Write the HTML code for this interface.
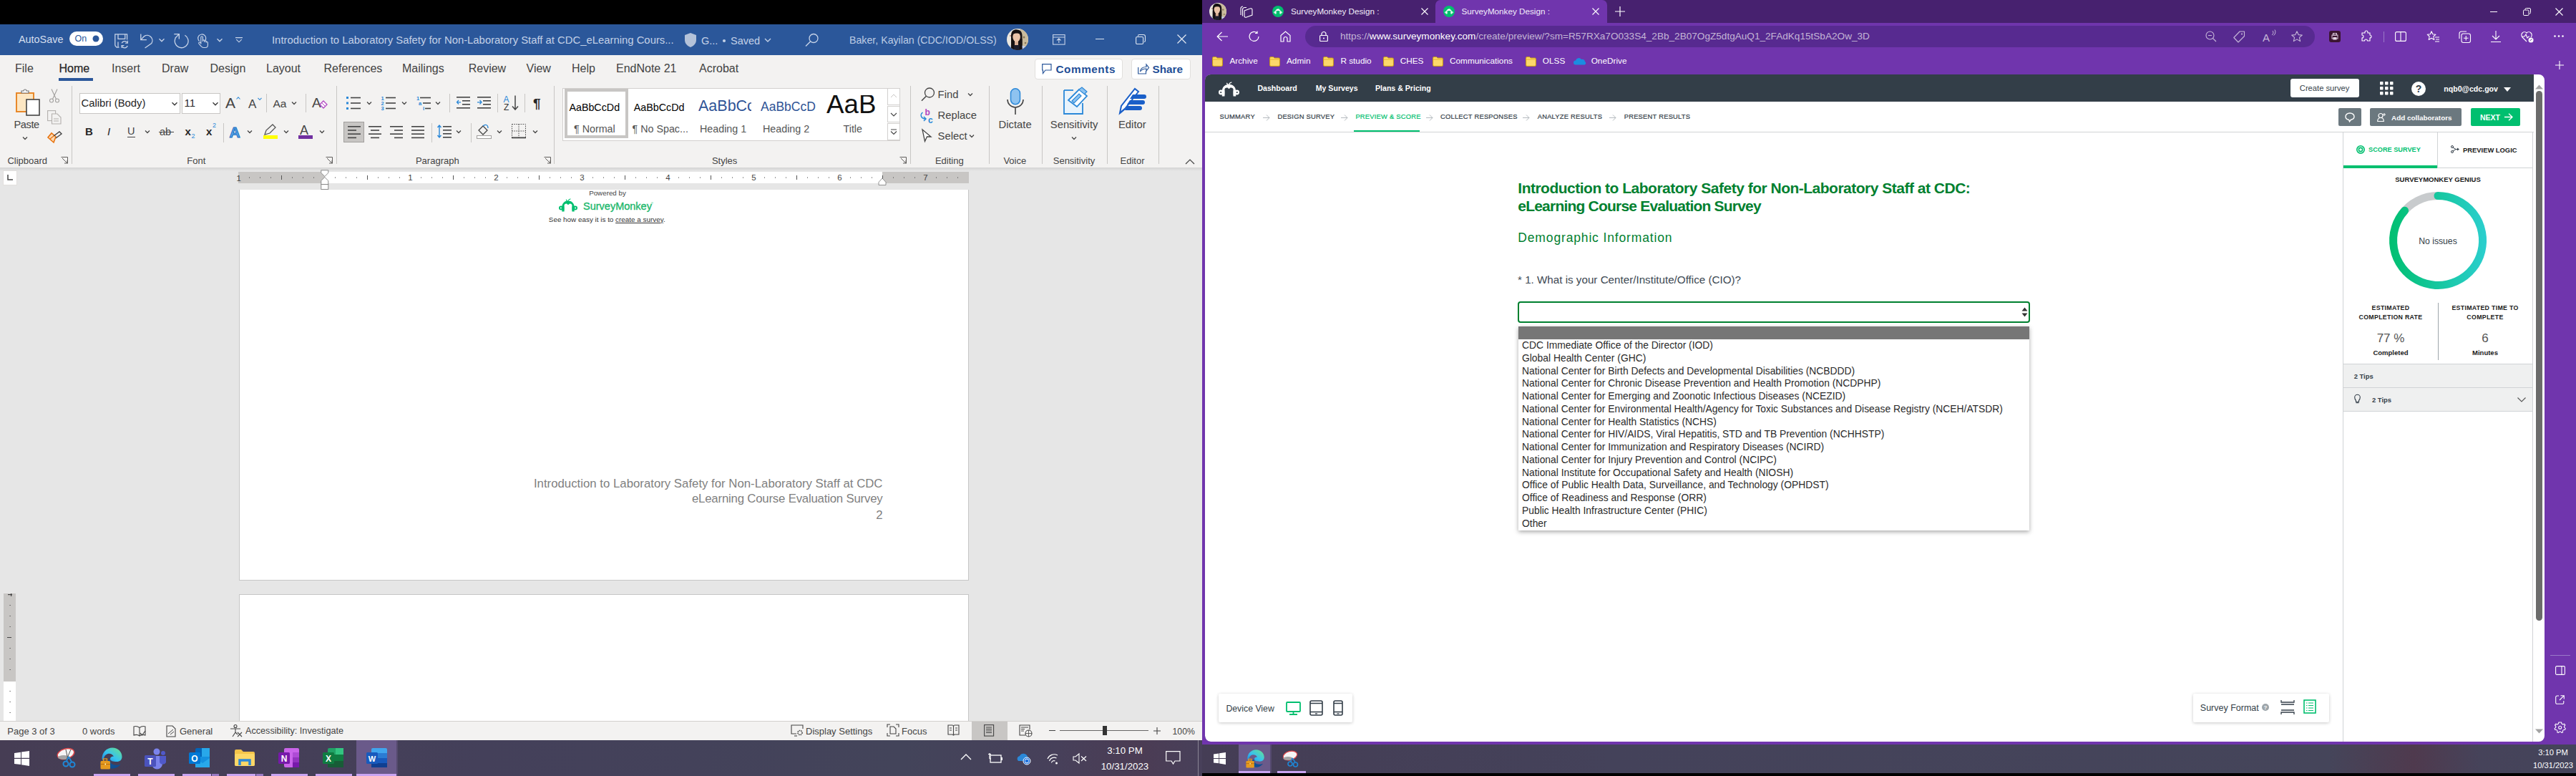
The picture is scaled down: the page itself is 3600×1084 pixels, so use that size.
<!DOCTYPE html>
<html><head><meta charset="utf-8">
<style>
*{margin:0;padding:0;box-sizing:border-box}
html,body{width:3600px;height:1084px;overflow:hidden;background:#000;font-family:"Liberation Sans",sans-serif;position:relative}
.a{position:absolute}
.t{position:absolute;white-space:nowrap;line-height:1}
svg{position:absolute;overflow:visible}
</style></head><body>
<div class="a" style="left:0px;top:34px;width:1680px;height:1050px;background:#e6e6e6"></div>
<div class="a" style="left:0px;top:34px;width:1680px;height:43px;background:#2b579a"></div>
<div class="t" style="left:26.00px;top:47.81px;font-size:14.4px;color:#d5dfee;font-weight:400;">AutoSave</div>
<div class="a" style="left:97px;top:44px;width:47px;height:20px;background:#fff;border-radius:10px"></div>
<div class="t" style="left:104.50px;top:47.92px;font-size:12.5px;color:#2b579a;font-weight:400;">On</div>
<svg style="left:129px;top:49px;" width="10" height="10" viewBox="0 0 10 10"><circle cx="5" cy="5" r="4.5" fill="#2b579a"/></svg>
<svg style="left:160px;top:47px;" width="20" height="20" viewBox="0 0 20 20"><path d="M0.8,16.5 V0.8 H17.6 V8.5 M0.8,16.5 L3,19.2 H6.5 M5,19 V11.6 M5,0.8 V7.4 H14.8 V0.8" fill="none" stroke="#c9d5e9" stroke-width="1.25"/><path d="M10.2,13.2 A4.3,4.3 0 0 1 17.8,12.6 M18.2,17 A4.3,4.3 0 0 1 10.4,17.6" fill="none" stroke="#c9d5e9" stroke-width="1.25"/><path d="M18.4,9.8 V13.3 H15 M10,20 V16.6 H13.4" fill="none" stroke="#c9d5e9" stroke-width="1.1"/></svg>
<svg style="left:196px;top:47px;" width="20" height="21" viewBox="0 0 20 21"><path d="M0.8,0.5 V8.6 H8.9" fill="none" stroke="#c9d5e9" stroke-width="1.3"/><path d="M0.8,8.6 L5.6,3.6 A7.3,7.3 0 0 1 15.8,13.6 L6.6,20" fill="none" stroke="#c9d5e9" stroke-width="1.3"/></svg>
<svg style="left:220.3px;top:51.5px;" width="12" height="8" viewBox="0 0 12 8"><path d="M2.5,2.25 L6,5.75 L9.5,2.25" fill="none" stroke="#c9d5e9" stroke-width="1.25"/></svg>
<svg style="left:243px;top:47px;" width="21" height="21" viewBox="0 0 21 21"><path d="M15.4,2.2 A9.4,9.4 0 1 1 2.2,6.2" fill="none" stroke="#c9d5e9" stroke-width="1.3"/><path d="M0.3,0.6 H7.3 V7.6 M7.3,0.6 L1.8,6.2" fill="none" stroke="#c9d5e9" stroke-width="1.3"/></svg>
<svg style="left:276px;top:47px;" width="15" height="20" viewBox="0 0 15 20"><path d="M2.5,10.5 A5.5,5.5 0 1 1 10.8,9.5" fill="none" stroke="#c9d5e9" stroke-width="1.2"/><path d="M4.8,14.5 V5 a1.3,1.3 0 0 1 2.6,0 V11 M7.4,10 a1.2,1.2 0 0 1 2.4,0 V12 M9.8,11 a1.2,1.2 0 0 1 2.4,0 V12.5 M12.2,12 a1.2,1.2 0 0 1 2.2,0.5 V16 C14.4,18 13,19.5 11,19.5 H8.5 C7,19.5 6,18.8 5,17.5 L1.8,13.8 a1.2,1.2 0 0 1 1.8,-1.5 L4.8,13.5" fill="none" stroke="#c9d5e9" stroke-width="1.15"/></svg>
<svg style="left:300.5px;top:51.5px;" width="12" height="8" viewBox="0 0 12 8"><path d="M2.5,2.25 L6,5.75 L9.5,2.25" fill="none" stroke="#c9d5e9" stroke-width="1.25"/></svg>
<svg style="left:329px;top:52px;" width="10" height="9" viewBox="0 0 10 9"><path d="M0,0.6 H10 M1.3,3.2 L5,6.8 L8.7,3.2" fill="none" stroke="#c9d5e9" stroke-width="1.1"/></svg>
<div class="t" style="left:380.00px;top:49.43px;font-size:14.85px;color:#c3d1e7;font-weight:400;">Introduction to Laboratory Safety for Non-Laboratory Staff at CDC_eLearning Cours...</div>
<svg style="left:956px;top:45px;" width="18" height="22" viewBox="0 0 18 22"><path d="M9,1 L17,4 V11 C17,16 13,19.5 9,21 C5,19.5 1,16 1,11 V4 Z" fill="#b4c2d9"/></svg>
<div class="t" style="left:980.00px;top:49.73px;font-size:14.5px;color:#c3d1e7;font-weight:400;">G...</div>
<svg style="left:1009px;top:54px;" width="6" height="6" viewBox="0 0 6 6"><circle cx="3" cy="3" r="2.1" fill="#c3d1e7"/></svg>
<div class="t" style="left:1021.00px;top:49.73px;font-size:14.5px;color:#c3d1e7;font-weight:400;">Saved</div>
<svg style="left:1067px;top:52px;" width="12" height="8" viewBox="0 0 12 8"><path d="M2,2.0 L6,6.0 L10,2.0" fill="none" stroke="#c3d1e7" stroke-width="1.4"/></svg>
<svg style="left:1125px;top:46px;" width="20" height="20" viewBox="0 0 20 20"><circle cx="12" cy="7.5" r="6" fill="none" stroke="#c6d3e8" stroke-width="1.3"/><path d="M7.5,12 L1,18.5" stroke="#c6d3e8" stroke-width="1.4"/></svg>
<div class="t" style="left:1187.00px;top:49.28px;font-size:14.2px;color:#bccbe4;font-weight:400;">Baker, Kayilan (CDC/IOD/OLSS)</div>
<svg style="left:1407px;top:39.7px;" width="30" height="30" viewBox="0 0 30 30"><defs><clipPath id="av1"><circle cx="15" cy="15" r="15"/></clipPath></defs><g clip-path="url(#av1)"><rect width="30" height="30" fill="#ebe7df"/><rect x="18" y="0" width="12" height="30" fill="#c9bb9c"/><circle cx="24" cy="12" r="1.5" fill="#8a7a5a"/><circle cx="26" cy="20" r="1.3" fill="#8a7a5a"/><circle cx="5" cy="10" r="0.8" fill="#a04030"/><path d="M6,30 V9.5 C6,3.5 9.5,1.3 13.5,1.3 C18,1.3 21.5,4 21.5,10 V30 Z" fill="#161112"/><path d="M2,30 C3,24.5 6.5,22.5 10.5,22.5 H16.5 C20.5,22.5 24.5,24.5 27.5,30 Z" fill="#1d1d2b"/><path d="M3,25 L8,23 L9,29 L4,30 Z" fill="#c6d2ee"/><path d="M21,23.5 L26,25 L25.5,29 L21.5,28.5 Z" fill="#c6d2ee"/><rect x="11" y="16" width="5" height="7" fill="#d9ae94"/><ellipse cx="13.6" cy="11.6" rx="5.3" ry="7" fill="#eac3a8"/><path d="M8.3,8 C9,4.5 11,3.5 13.8,3.5 C16.5,3.5 18.5,5 19,8 C17,6 11,6 8.3,8 Z" fill="#161112"/><path d="M6,14 V30 H10 V17 Z M17.5,17 V30 H21.5 V14 Z" fill="#161112"/></g></svg>
<svg style="left:1471px;top:48px;" width="18" height="15" viewBox="0 0 18 15"><rect x="0.6" y="0.6" width="16.5" height="13.5" fill="none" stroke="#c6d3e8" stroke-width="1.1"/><path d="M0.6,4 H17 M8.8,12 V6 M6,8.5 L8.8,5.8 L11.6,8.5" fill="none" stroke="#c6d3e8" stroke-width="1.1"/></svg>
<div class="a" style="left:1531px;top:54px;width:12px;height:1.3px;background:#dfe6f1"></div>
<svg style="left:1587px;top:48px;" width="14" height="14" viewBox="0 0 14 14"><path d="M3.5,2.5 V2 a1.5,1.5 0 0 1 1.5,-1.5 H11 a2.5,2.5 0 0 1 2.5,2.5 V9 a1.5,1.5 0 0 1 -1.5,1.5" fill="none" stroke="#dfe6f1" stroke-width="1.1"/><rect x="0.6" y="3.5" width="10" height="10" rx="1.5" fill="none" stroke="#dfe6f1" stroke-width="1.1"/></svg>
<svg style="left:1645px;top:48px;" width="13" height="13" viewBox="0 0 13 13"><path d="M0.5,0.5 L12.5,12.5 M12.5,0.5 L0.5,12.5" stroke="#e6ebf3" stroke-width="1.2"/></svg>
<div class="a" style="left:0px;top:77px;width:1680px;height:157px;background:#f3f2f1"></div>
<div class="a" style="left:0px;top:234px;width:1680px;height:5px;background:linear-gradient(#d4d4d4,#e6e6e6)"></div>
<div class="t" style="left:21.00px;top:88.26px;font-size:16px;color:#424242;font-weight:400;">File</div>
<div class="t" style="left:82.50px;top:88.26px;font-size:16px;color:#262626;font-weight:400;-webkit-text-stroke:0.25px #262626">Home</div>
<div class="t" style="left:156.00px;top:88.26px;font-size:16px;color:#424242;font-weight:400;">Insert</div>
<div class="t" style="left:226.00px;top:88.26px;font-size:16px;color:#424242;font-weight:400;">Draw</div>
<div class="t" style="left:293.50px;top:88.26px;font-size:16px;color:#424242;font-weight:400;">Design</div>
<div class="t" style="left:372.00px;top:88.26px;font-size:16px;color:#424242;font-weight:400;">Layout</div>
<div class="t" style="left:452.50px;top:88.26px;font-size:16px;color:#424242;font-weight:400;">References</div>
<div class="t" style="left:562.00px;top:88.26px;font-size:16px;color:#424242;font-weight:400;">Mailings</div>
<div class="t" style="left:654.70px;top:88.26px;font-size:16px;color:#424242;font-weight:400;">Review</div>
<div class="t" style="left:735.50px;top:88.26px;font-size:16px;color:#424242;font-weight:400;">View</div>
<div class="t" style="left:799.00px;top:88.26px;font-size:16px;color:#424242;font-weight:400;">Help</div>
<div class="t" style="left:861.00px;top:88.26px;font-size:16px;color:#424242;font-weight:400;">EndNote 21</div>
<div class="t" style="left:977.00px;top:88.26px;font-size:16px;color:#424242;font-weight:400;">Acrobat</div>
<div class="a" style="left:82px;top:109px;width:48px;height:3.5px;background:#2b579a"></div>
<div class="a" style="left:1446px;top:82px;width:123px;height:29px;background:#fff;border:1px solid #e1dfdd;border-radius:4px"></div>
<svg style="left:1456px;top:89px;" width="14" height="15" viewBox="0 0 14 15"><path d="M0.7,0.7 H13 V9 H5 L1.5,13.5 V9 H0.7 Z" fill="none" stroke="#2b579a" stroke-width="1.2"/></svg>
<div class="t" style="left:1475.50px;top:89.05px;font-size:15.3px;color:#1f4e96;font-weight:700;letter-spacing:0.55px;">Comments</div>
<div class="a" style="left:1581px;top:82px;width:83px;height:29px;background:#fff;border:1px solid #e1dfdd;border-radius:4px"></div>
<svg style="left:1590px;top:88px;" width="16" height="16" viewBox="0 0 16 16"><path d="M0.7,6 V15 H11.5 V11" fill="none" stroke="#2b579a" stroke-width="1.2"/><path d="M3.5,12 C4,7 7,5.5 12,5.5 V2 L15.5,6.5 L12,11 V8 C8,8 5.5,9 3.5,12 Z" fill="none" stroke="#2b579a" stroke-width="1.2"/></svg>
<div class="t" style="left:1610.50px;top:89.05px;font-size:15.3px;color:#1f4e96;font-weight:700;">Share</div>
<div class="a" style="left:99.6px;top:120px;width:1px;height:109px;background:#c8c6c4"></div>
<div class="a" style="left:469.6px;top:120px;width:1px;height:109px;background:#c8c6c4"></div>
<div class="a" style="left:774px;top:120px;width:1px;height:109px;background:#c8c6c4"></div>
<div class="a" style="left:1271.5px;top:120px;width:1px;height:109px;background:#c8c6c4"></div>
<div class="a" style="left:1382.4px;top:120px;width:1px;height:109px;background:#c8c6c4"></div>
<div class="a" style="left:1455.5px;top:120px;width:1px;height:109px;background:#c8c6c4"></div>
<div class="a" style="left:1546.6px;top:120px;width:1px;height:109px;background:#c8c6c4"></div>
<div class="a" style="left:1618.5px;top:120px;width:1px;height:109px;background:#c8c6c4"></div>
<div class="t" style="left:10.40px;top:217.50px;font-size:13px;color:#444;font-weight:400;">Clipboard</div>
<div class="t" style="left:-325.70px;width:1200px;text-align:center;top:217.50px;font-size:13px;color:#444;font-weight:400;">Font</div>
<div class="t" style="left:11.30px;width:1200px;text-align:center;top:217.50px;font-size:13px;color:#444;font-weight:400;">Paragraph</div>
<div class="t" style="left:412.60px;width:1200px;text-align:center;top:217.50px;font-size:13px;color:#444;font-weight:400;">Styles</div>
<div class="t" style="left:726.80px;width:1200px;text-align:center;top:217.50px;font-size:13px;color:#444;font-weight:400;">Editing</div>
<div class="t" style="left:818.30px;width:1200px;text-align:center;top:217.50px;font-size:13px;color:#444;font-weight:400;">Voice</div>
<div class="t" style="left:901.00px;width:1200px;text-align:center;top:217.50px;font-size:13px;color:#444;font-weight:400;">Sensitivity</div>
<div class="t" style="left:982.50px;width:1200px;text-align:center;top:217.50px;font-size:13px;color:#444;font-weight:400;">Editor</div>
<svg style="left:85px;top:219px;" width="10" height="10" viewBox="0 0 10 10"><path d="M0.5,0.5 H9.5 V9.5 M2,2 L9,9 M5,9 H9 V5" fill="none" stroke="#605e5c" stroke-width="1"/></svg>
<svg style="left:454.5px;top:219px;" width="10" height="10" viewBox="0 0 10 10"><path d="M0.5,0.5 H9.5 V9.5 M2,2 L9,9 M5,9 H9 V5" fill="none" stroke="#605e5c" stroke-width="1"/></svg>
<svg style="left:760px;top:219px;" width="10" height="10" viewBox="0 0 10 10"><path d="M0.5,0.5 H9.5 V9.5 M2,2 L9,9 M5,9 H9 V5" fill="none" stroke="#605e5c" stroke-width="1"/></svg>
<svg style="left:1257px;top:219px;" width="10" height="10" viewBox="0 0 10 10"><path d="M0.5,0.5 H9.5 V9.5 M2,2 L9,9 M5,9 H9 V5" fill="none" stroke="#605e5c" stroke-width="1"/></svg>
<svg style="left:1656px;top:222px;" width="14" height="8" viewBox="0 0 14 8"><path d="M1,7 L7,1 L13,7" fill="none" stroke="#444" stroke-width="1.2"/></svg>
<svg style="left:21px;top:124px;" width="36" height="38" viewBox="0 0 36 38"><path d="M2,6 H26 V32 H2 Z" fill="#fde7c3" stroke="#e8892b" stroke-width="2"/><path d="M9,6 V3 H12 a2,2 0 0 1 4,0 H19 V6 Z" fill="#fff" stroke="#777" stroke-width="1.2"/><rect x="16" y="15" width="18" height="22" fill="#fff" stroke="#444" stroke-width="1.6"/></svg>
<div class="t" style="left:19.50px;top:167.24px;font-size:14.6px;color:#444;font-weight:400;letter-spacing:-0.4px;">Paste</div>
<svg style="left:29px;top:189px;" width="12" height="8" viewBox="0 0 12 8"><path d="M3,2.5 L6,5.5 L9,2.5" fill="none" stroke="#444" stroke-width="1.25"/></svg>
<svg style="left:69px;top:124px;" width="14" height="20" viewBox="0 0 14 20"><circle cx="3" cy="16.5" r="2.5" fill="none" stroke="#a19f9d" stroke-width="1.1"/><circle cx="11" cy="16.5" r="2.5" fill="none" stroke="#a19f9d" stroke-width="1.1"/><path d="M4.5,14.5 L11,0.5 M9.5,14.5 L3,0.5" stroke="#a19f9d" stroke-width="1.1"/></svg>
<svg style="left:66px;top:154px;" width="20" height="20" viewBox="0 0 20 20"><rect x="0.6" y="0.6" width="11" height="14" fill="none" stroke="#b3b0ad" stroke-width="1.1"/><path d="M6.5,5 H14 L19,10 V19 H6.5 Z" fill="#f3f2f1" stroke="#b3b0ad" stroke-width="1.1"/><path d="M9,12 H16 M9,15 H16" stroke="#b3b0ad"/></svg>
<svg style="left:66px;top:183px;" width="21" height="20" viewBox="0 0 21 20"><path d="M1,9 L9,16 L12,8 L6,3 Z" fill="#fcd8b0" stroke="#e8730f" stroke-width="1.6"/><path d="M4,11 L9,7" stroke="#e8730f" stroke-width="1.2"/><path d="M9,7 L17,1 L20,4 L12,10" fill="none" stroke="#444" stroke-width="1.4"/></svg>
<div class="a" style="left:110.5px;top:130px;width:141px;height:29px;background:#fff;border:1px solid #c8c6c4"></div>
<div class="t" style="left:113.50px;top:137.43px;font-size:14.85px;color:#262626;font-weight:400;">Calibri (Body)</div>
<svg style="left:238px;top:141px;" width="12" height="8" viewBox="0 0 12 8"><path d="M2.5,2.25 L6,5.75 L9.5,2.25" fill="none" stroke="#333" stroke-width="1.25"/></svg>
<div class="a" style="left:254px;top:130px;width:54px;height:29px;background:#fff;border:1px solid #c8c6c4"></div>
<div class="t" style="left:257.50px;top:137.43px;font-size:14.85px;color:#262626;font-weight:400;">11</div>
<svg style="left:294.5px;top:141px;" width="12" height="8" viewBox="0 0 12 8"><path d="M2.5,2.25 L6,5.75 L9.5,2.25" fill="none" stroke="#333" stroke-width="1.25"/></svg>
<div class="t" style="left:315.00px;top:133.22px;font-size:21px;color:#444;font-weight:400;">A</div>
<svg style="left:330px;top:135px;" width="6" height="4" viewBox="0 0 6 4"><path d="M0.5,3.5 L3,0.8 L5.5,3.5" fill="none" stroke="#2b88d8" stroke-width="1.1"/></svg>
<div class="t" style="left:347.00px;top:136.61px;font-size:17px;color:#444;font-weight:400;">A</div>
<svg style="left:360px;top:136px;" width="6" height="4" viewBox="0 0 6 4"><path d="M0.5,0.8 L3,3.5 L5.5,0.8" fill="none" stroke="#2b88d8" stroke-width="1.1"/></svg>
<div class="a" style="left:372px;top:131px;width:1px;height:26px;background:#c8c6c4"></div>
<div class="t" style="left:381.50px;top:137.38px;font-size:15.5px;color:#444;font-weight:400;">Aa</div>
<svg style="left:404.5px;top:140px;" width="12" height="8" viewBox="0 0 12 8"><path d="M3,2.5 L6,5.5 L9,2.5" fill="none" stroke="#444" stroke-width="1.25"/></svg>
<div class="a" style="left:427px;top:131px;width:1px;height:26px;background:#c8c6c4"></div>
<div class="t" style="left:436.00px;top:134.42px;font-size:19px;color:#444;font-weight:400;">A</div>
<svg style="left:446px;top:140px;" width="12" height="11" viewBox="0 0 12 11"><path d="M1,6 L6,1 L11,6 L6,11 Z" fill="#fff" stroke="#b146c2" stroke-width="1.3"/><path d="M3.5,3.5 L8.5,8.5" stroke="#b146c2" stroke-width="1"/></svg>
<div class="t" style="left:119.00px;top:176.30px;font-size:15px;color:#262626;font-weight:700;">B</div>
<div class="t" style="left:150.00px;top:176.30px;font-size:15px;color:#262626;font-weight:400;font-style:italic;font-family:"Liberation Serif",serif">I</div>
<div class="t" style="left:178.00px;top:176.23px;font-size:14.5px;color:#444;font-weight:400;">U</div>
<div class="a" style="left:178px;top:191px;width:11px;height:1.2px;background:#444"></div>
<svg style="left:200px;top:180px;" width="12" height="8" viewBox="0 0 12 8"><path d="M3,2.5 L6,5.5 L9,2.5" fill="none" stroke="#444" stroke-width="1.25"/></svg>
<div class="t" style="left:223.00px;top:176.73px;font-size:14.5px;color:#444;font-weight:400;">ab</div>
<div class="a" style="left:222px;top:184px;width:21px;height:1.2px;background:#444"></div>
<div class="t" style="left:258.50px;top:176.30px;font-size:15px;color:#262626;font-weight:700;">x</div>
<div class="t" style="left:267.50px;top:186.38px;font-size:9px;color:#2b88d8;font-weight:400;">2</div>
<div class="t" style="left:288.00px;top:176.30px;font-size:15px;color:#262626;font-weight:700;">x</div>
<div class="t" style="left:297.00px;top:171.38px;font-size:9px;color:#2b88d8;font-weight:400;">2</div>
<div class="a" style="left:312px;top:172px;width:1px;height:27px;background:#c8c6c4"></div>
<div class="t" style="left:320.50px;top:174.22px;font-size:21px;color:#2b88d8;font-weight:700;-webkit-text-stroke:1px #1a6dbf;color:#5aa9ec">A</div>
<svg style="left:343px;top:180px;" width="12" height="8" viewBox="0 0 12 8"><path d="M3,2.5 L6,5.5 L9,2.5" fill="none" stroke="#444" stroke-width="1.25"/></svg>
<svg style="left:368px;top:173px;" width="20" height="16" viewBox="0 0 20 16"><path d="M2,15 L4,9 L13,1 L17,5 L9,13 Z" fill="none" stroke="#555" stroke-width="1.3"/></svg>
<div class="a" style="left:368px;top:189px;width:20px;height:4.5px;background:#ffff00"></div>
<svg style="left:394px;top:180px;" width="12" height="8" viewBox="0 0 12 8"><path d="M3,2.5 L6,5.5 L9,2.5" fill="none" stroke="#444" stroke-width="1.25"/></svg>
<div class="t" style="left:419.00px;top:172.76px;font-size:18px;color:#444;font-weight:400;">A</div>
<div class="a" style="left:417px;top:189px;width:20px;height:4.5px;background:#7030a0"></div>
<svg style="left:443.5px;top:180px;" width="12" height="8" viewBox="0 0 12 8"><path d="M3,2.5 L6,5.5 L9,2.5" fill="none" stroke="#444" stroke-width="1.25"/></svg>
<svg style="left:484px;top:134px;" width="20" height="20" viewBox="0 0 20 20"><rect x="0" y="1" width="3" height="3" fill="#2b88d8"/><rect x="0" y="8.5" width="3" height="3" fill="#2b88d8"/><rect x="0" y="16" width="3" height="3" fill="#2b88d8"/><rect x="6" y="1.7" width="14" height="1.6" fill="#444"/><rect x="6" y="9.2" width="14" height="1.6" fill="#444"/><rect x="6" y="16.7" width="14" height="1.6" fill="#444"/></svg>
<svg style="left:510px;top:140px;" width="12" height="8" viewBox="0 0 12 8"><path d="M3,2.5 L6,5.5 L9,2.5" fill="none" stroke="#444" stroke-width="1.25"/></svg>
<svg style="left:533px;top:134px;" width="20" height="20" viewBox="0 0 20 20"><text x="-0.5" y="6" font-size="7.5" font-weight="700" fill="#2b88d8" font-family="Liberation Sans">1</text><text x="-0.5" y="13" font-size="7.5" font-weight="700" fill="#2b88d8" font-family="Liberation Sans">2</text><text x="-0.5" y="20" font-size="7.5" font-weight="700" fill="#2b88d8" font-family="Liberation Sans">3</text><rect x="6" y="1.7" width="14" height="1.6" fill="#444"/><rect x="6" y="9.2" width="14" height="1.6" fill="#444"/><rect x="6" y="16.7" width="14" height="1.6" fill="#444"/></svg>
<svg style="left:559px;top:140px;" width="12" height="8" viewBox="0 0 12 8"><path d="M3,2.5 L6,5.5 L9,2.5" fill="none" stroke="#444" stroke-width="1.25"/></svg>
<svg style="left:582px;top:134px;" width="20" height="20" viewBox="0 0 20 20"><text x="0" y="6" font-size="7.5" font-weight="700" fill="#2b88d8" font-family="Liberation Sans">1</text><text x="3" y="13" font-size="7.5" font-weight="700" fill="#2b88d8" font-family="Liberation Sans">a</text><text x="9" y="20" font-size="7.5" font-weight="700" fill="#2b88d8" font-family="Liberation Sans">i</text><rect x="5" y="1.7" width="15" height="1.6" fill="#444"/><rect x="9" y="9.2" width="11" height="1.6" fill="#444"/><rect x="12" y="16.7" width="8" height="1.6" fill="#444"/></svg>
<svg style="left:605.5px;top:140px;" width="12" height="8" viewBox="0 0 12 8"><path d="M3,2.5 L6,5.5 L9,2.5" fill="none" stroke="#444" stroke-width="1.25"/></svg>
<div class="a" style="left:628px;top:131px;width:1px;height:26px;background:#c8c6c4"></div>
<svg style="left:637.7px;top:134px;" width="19" height="20" viewBox="0 0 19 20"><rect x="0" y="1" width="19" height="1.6" fill="#444"/><rect x="8" y="6" width="11" height="1.6" fill="#444"/><rect x="8" y="11" width="11" height="1.6" fill="#444"/><rect x="0" y="16" width="19" height="1.6" fill="#444"/><path d="M6,8.8 H0.5 M3,6 L0.5,8.8 L3,11.5" fill="none" stroke="#2b88d8" stroke-width="1.3"/></svg>
<svg style="left:667px;top:134px;" width="19" height="20" viewBox="0 0 19 20"><rect x="0" y="1" width="19" height="1.6" fill="#444"/><rect x="8" y="6" width="11" height="1.6" fill="#444"/><rect x="8" y="11" width="11" height="1.6" fill="#444"/><rect x="0" y="16" width="19" height="1.6" fill="#444"/><path d="M0,8.8 H6 M3.5,6 L6,8.8 L3.5,11.5" fill="none" stroke="#2b88d8" stroke-width="1.3"/></svg>
<div class="a" style="left:695px;top:131px;width:1px;height:26px;background:#c8c6c4"></div>
<svg style="left:704px;top:132px;" width="22" height="24" viewBox="0 0 22 24"><text x="-0.5" y="10.5" font-size="12" fill="#2b88d8" font-family="Liberation Sans">A</text><text x="0" y="22" font-size="12" fill="#333" font-family="Liberation Sans">Z</text><path d="M16,1.5 V21 M12,16.5 L16,21.2 L20,16.5" fill="none" stroke="#444" stroke-width="1.5"/></svg>
<div class="a" style="left:733px;top:131px;width:1px;height:26px;background:#c8c6c4"></div>
<div class="t" style="left:745.00px;top:134.92px;font-size:19px;color:#262626;font-weight:700;">¶</div>
<div class="a" style="left:480px;top:170px;width:28.5px;height:28.5px;background:#c8c6c4;border:1px solid #a19f9d"></div>
<svg style="left:485.5px;top:175px;" width="18" height="20" viewBox="0 0 18 20"><rect x="0" y="1.0" width="18" height="1.6" fill="#444"/><rect x="0" y="6.2" width="12" height="1.6" fill="#444"/><rect x="0" y="11.4" width="18" height="1.6" fill="#444"/><rect x="0" y="16.6" width="12" height="1.6" fill="#444"/></svg>
<svg style="left:515px;top:175px;" width="18" height="20" viewBox="0 0 18 20"><rect x="0" y="1.0" width="18" height="1.6" fill="#444"/><rect x="3" y="6.2" width="12" height="1.6" fill="#444"/><rect x="0" y="11.4" width="18" height="1.6" fill="#444"/><rect x="3" y="16.6" width="12" height="1.6" fill="#444"/></svg>
<svg style="left:545px;top:175px;" width="18" height="20" viewBox="0 0 18 20"><rect x="0" y="1.0" width="18" height="1.6" fill="#444"/><rect x="6" y="6.2" width="12" height="1.6" fill="#444"/><rect x="0" y="11.4" width="18" height="1.6" fill="#444"/><rect x="6" y="16.6" width="12" height="1.6" fill="#444"/></svg>
<svg style="left:575px;top:175px;" width="18" height="20" viewBox="0 0 18 20"><rect x="0" y="1.0" width="18" height="1.6" fill="#444"/><rect x="0" y="6.2" width="18" height="1.6" fill="#444"/><rect x="0" y="11.4" width="18" height="1.6" fill="#444"/><rect x="0" y="16.6" width="18" height="1.6" fill="#444"/></svg>
<div class="a" style="left:602.7px;top:172px;width:1px;height:27px;background:#c8c6c4"></div>
<svg style="left:610.8px;top:174px;" width="20" height="20" viewBox="0 0 20 20"><path d="M3,1 V18 M0.5,4 L3,1 L5.5,4 M0.5,15 L3,18 L5.5,15" fill="none" stroke="#2b88d8" stroke-width="1.4"/><rect x="8" y="2" width="12" height="1.6" fill="#444"/><rect x="8" y="7" width="12" height="1.6" fill="#444"/><rect x="8" y="12" width="12" height="1.6" fill="#444"/><rect x="8" y="17" width="12" height="1.6" fill="#444"/></svg>
<svg style="left:634.5px;top:180px;" width="12" height="8" viewBox="0 0 12 8"><path d="M3,2.5 L6,5.5 L9,2.5" fill="none" stroke="#444" stroke-width="1.25"/></svg>
<div class="a" style="left:657.6px;top:172px;width:1px;height:27px;background:#c8c6c4"></div>
<svg style="left:665.6px;top:173px;" width="21" height="21" viewBox="0 0 21 21"><path d="M3,9 L9,3 L15,9 L9,15 Z" fill="none" stroke="#444" stroke-width="1.3"/><path d="M9,3 C12,0 16,1 16,6" fill="none" stroke="#2b88d8" stroke-width="1.3"/><rect x="0.5" y="16.5" width="20" height="4" fill="#fff" stroke="#a19f9d" stroke-width="1"/></svg>
<svg style="left:692px;top:180px;" width="12" height="8" viewBox="0 0 12 8"><path d="M3,2.5 L6,5.5 L9,2.5" fill="none" stroke="#444" stroke-width="1.25"/></svg>
<svg style="left:714.5px;top:173px;" width="20" height="20" viewBox="0 0 20 20"><rect x="0.5" y="0.5" width="19" height="19" fill="none" stroke="#444" stroke-width="1" stroke-dasharray="1.5,1.5"/><path d="M10,0.5 V19.5 M0.5,10 H19.5" stroke="#444" stroke-width="1" stroke-dasharray="1.5,1.5"/><rect x="0" y="18.5" width="20" height="1.8" fill="#444"/></svg>
<svg style="left:741.7px;top:180px;" width="12" height="8" viewBox="0 0 12 8"><path d="M3,2.5 L6,5.5 L9,2.5" fill="none" stroke="#444" stroke-width="1.25"/></svg>
<div class="a" style="left:786px;top:122.6px;width:472px;height:74px;background:#fff;border:1px solid #d2d0ce"></div>
<div class="a" style="left:788.5px;top:124px;width:89px;height:69px;background:#fff;border:4px solid #c8c6c4"></div>
<div class="t" style="left:795.40px;top:142.90px;font-size:14.3px;color:#000;font-weight:400;">AaBbCcDd</div>
<div class="t" style="left:802.00px;top:172.90px;font-size:14.3px;color:#555;font-weight:400;">¶ Normal</div>
<div class="t" style="left:885.70px;top:142.90px;font-size:14.3px;color:#000;font-weight:400;">AaBbCcDd</div>
<div class="t" style="left:883.50px;top:172.90px;font-size:14.3px;color:#555;font-weight:400;">¶ No Spac...</div>
<div class="a" style="left:976px;top:128px;width:74px;height:36px;overflow:hidden"><div class="t" style="left:0;top:10.30px;font-size:21.5px;color:#2f5496">AaBbCc</div></div>
<div class="t" style="left:978.00px;top:172.90px;font-size:14.3px;color:#555;font-weight:400;">Heading 1</div>
<div class="a" style="left:1063px;top:132px;width:77px;height:32px;overflow:hidden"><div class="t" style="left:0;top:8.69px;font-size:17.5px;color:#2f5496">AaBbCcD</div></div>
<div class="t" style="left:1066.00px;top:172.90px;font-size:14.3px;color:#555;font-weight:400;">Heading 2</div>
<div class="a" style="left:1150px;top:133px;width:80px;height:32px;overflow:hidden"><div class="t" style="left:5px;top:-4.97px;font-size:36px;color:#111;transform:scaleX(1.02);transform-origin:left">AaB</div></div>
<div class="t" style="left:1178.50px;top:172.90px;font-size:14.3px;color:#555;font-weight:400;">Title</div>
<div class="a" style="left:1239.6px;top:122.8px;width:18.5px;height:24.5px;border:1px solid #d2d0ce;background:#fff"></div>
<svg style="left:1244px;top:131px;" width="10" height="6" viewBox="0 0 10 6"><path d="M1,5 L5,1 L9,5" fill="none" stroke="#c8c6c4" stroke-width="1"/></svg>
<div class="a" style="left:1239.6px;top:148.4px;width:18.5px;height:22.5px;border:1px solid #d2d0ce;background:#fff"></div>
<svg style="left:1244px;top:157px;" width="10" height="6" viewBox="0 0 10 6"><path d="M1,1 L5,5 L9,1" fill="none" stroke="#444" stroke-width="1.1"/></svg>
<div class="a" style="left:1239.6px;top:172.4px;width:18.5px;height:24px;border:1px solid #d2d0ce;background:#fff"></div>
<svg style="left:1244px;top:180px;" width="10" height="8" viewBox="0 0 10 8"><path d="M1,1 H9 M1,3.5 L5,7.5 L9,3.5" fill="none" stroke="#444" stroke-width="1.1"/></svg>
<svg style="left:1287px;top:121.6px;" width="20" height="20" viewBox="0 0 20 20"><circle cx="12" cy="7.5" r="6.5" fill="none" stroke="#444" stroke-width="1.3"/><path d="M7.2,12.5 L1,18.7" stroke="#444" stroke-width="1.5"/></svg>
<div class="t" style="left:1310.60px;top:125.47px;font-size:14.8px;color:#444;font-weight:400;">Find</div>
<svg style="left:1349.6px;top:128px;" width="12" height="8" viewBox="0 0 12 8"><path d="M3,2.5 L6,5.5 L9,2.5" fill="none" stroke="#444" stroke-width="1.25"/></svg>
<svg style="left:1285px;top:151px;" width="22" height="22" viewBox="0 0 22 22"><text x="7.5" y="9.5" font-size="12" font-weight="700" fill="#b146c2" font-family="Liberation Sans">b</text><text x="12" y="20.5" font-size="12" font-weight="700" fill="#2b88d8" font-family="Liberation Sans">c</text><path d="M4.5,6 C1,8.5 1,14.5 8.5,15 M6,12 L9,15 L6,18" fill="none" stroke="#2b88d8" stroke-width="1.5"/></svg>
<div class="t" style="left:1310.60px;top:154.47px;font-size:14.8px;color:#444;font-weight:400;">Replace</div>
<svg style="left:1288px;top:180px;" width="15" height="19" viewBox="0 0 15 19"><path d="M1,1 L13,11 H7.5 L4.5,17.5 L1,1 Z" fill="#fff" stroke="#444" stroke-width="1.3"/></svg>
<div class="t" style="left:1310.60px;top:183.47px;font-size:14.8px;color:#444;font-weight:400;">Select</div>
<svg style="left:1352px;top:186px;" width="12" height="8" viewBox="0 0 12 8"><path d="M3,2.5 L6,5.5 L9,2.5" fill="none" stroke="#444" stroke-width="1.25"/></svg>
<svg style="left:1407px;top:122.8px;" width="24" height="38" viewBox="0 0 24 38"><rect x="5.5" y="0.8" width="13" height="22" rx="6.5" fill="#8ec3f0" stroke="#2b88d8" stroke-width="1.5"/><path d="M1,16 a11,11 0 0 0 22,0 M12,27 V37" fill="none" stroke="#444" stroke-width="1.6"/></svg>
<div class="t" style="left:1395.60px;top:167.47px;font-size:14.8px;color:#444;font-weight:400;">Dictate</div>
<svg style="left:1486px;top:122px;" width="35" height="38" viewBox="0 0 35 38"><path d="M1,4 V37 H27 V22" fill="#e8f3fc" stroke="#2b88d8" stroke-width="1.8"/><path d="M1,4 H14" stroke="#2b88d8" stroke-width="1.8"/><path d="M7,18 L22,3 L33,12 L19,27 Z" fill="#fff" stroke="#2b88d8" stroke-width="1.8"/><path d="M12,19 L22,9 L25,12 L15,22 Z" fill="#8ec3f0" stroke="#2b88d8" stroke-width="1.2"/><path d="M22,3 L26,0 L33,6 L30,9" fill="#8ec3f0" stroke="#2b88d8" stroke-width="1.2"/></svg>
<div class="t" style="left:1467.80px;top:167.47px;font-size:14.8px;color:#444;font-weight:400;">Sensitivity</div>
<svg style="left:1495px;top:188.7px;" width="12" height="8" viewBox="0 0 12 8"><path d="M3,2.5 L6,5.5 L9,2.5" fill="none" stroke="#444" stroke-width="1.25"/></svg>
<svg style="left:1563px;top:122px;" width="40" height="38" viewBox="0 0 40 38"><path d="M2,36 L4,26 L23,2 L28,6 L9,30 Z" fill="#fff" stroke="#1a5fc8" stroke-width="2"/><path d="M2,36 L9,30" stroke="#1a5fc8" stroke-width="2"/><path d="M20,10 H36 a3,3 0 0 1 0,6 H16 Z M16,18 H34 a3,3 0 0 1 0,6 H12 Z M12,26 H30 a3,3 0 0 1 0,6 H9 Z" fill="#1a5fc8"/></svg>
<div class="t" style="left:1563.00px;top:167.47px;font-size:14.8px;color:#444;font-weight:400;">Editor</div>
<div class="a" style="left:4px;top:238px;width:20px;height:21px;background:#fff;border:1px solid #e1dfdd"></div>
<svg style="left:10px;top:244px;" width="8" height="8" viewBox="0 0 8 8"><path d="M1,0 V7 H8" fill="none" stroke="#444" stroke-width="1.5"/></svg>
<div class="a" style="left:333px;top:240px;width:1021px;height:16px;background:#fff"></div>
<div class="a" style="left:333px;top:240px;width:120.5px;height:16px;background:#c8c6c4"></div>
<div class="a" style="left:1232.6px;top:240px;width:121px;height:16px;background:#c8c6c4"></div>
<svg style="left:333px;top:240px;" width="1021" height="16" viewBox="0 0 1021 16"><rect x="15" y="7.5" width="1" height="1.2" fill="#555"/><rect x="30" y="7.5" width="1" height="1.2" fill="#555"/><rect x="45" y="7.5" width="1" height="1.2" fill="#555"/><rect x="60" y="5" width="1" height="6" fill="#555"/><rect x="75" y="7.5" width="1" height="1.2" fill="#555"/><rect x="90" y="7.5" width="1" height="1.2" fill="#555"/><rect x="105" y="7.5" width="1" height="1.2" fill="#555"/><rect x="135" y="7.5" width="1" height="1.2" fill="#555"/><rect x="150" y="7.5" width="1" height="1.2" fill="#555"/><rect x="165" y="7.5" width="1" height="1.2" fill="#555"/><rect x="180" y="5" width="1" height="6" fill="#555"/><rect x="195" y="7.5" width="1" height="1.2" fill="#555"/><rect x="210" y="7.5" width="1" height="1.2" fill="#555"/><rect x="225" y="7.5" width="1" height="1.2" fill="#555"/><text x="240.5" y="12" font-size="11.5" fill="#444" text-anchor="middle" font-family="Liberation Sans">1</text><rect x="255" y="7.5" width="1" height="1.2" fill="#555"/><rect x="270" y="7.5" width="1" height="1.2" fill="#555"/><rect x="285" y="7.5" width="1" height="1.2" fill="#555"/><rect x="300" y="5" width="1" height="6" fill="#555"/><rect x="315" y="7.5" width="1" height="1.2" fill="#555"/><rect x="330" y="7.5" width="1" height="1.2" fill="#555"/><rect x="345" y="7.5" width="1" height="1.2" fill="#555"/><text x="360.5" y="12" font-size="11.5" fill="#444" text-anchor="middle" font-family="Liberation Sans">2</text><rect x="375" y="7.5" width="1" height="1.2" fill="#555"/><rect x="390" y="7.5" width="1" height="1.2" fill="#555"/><rect x="405" y="7.5" width="1" height="1.2" fill="#555"/><rect x="420" y="5" width="1" height="6" fill="#555"/><rect x="435" y="7.5" width="1" height="1.2" fill="#555"/><rect x="450" y="7.5" width="1" height="1.2" fill="#555"/><rect x="465" y="7.5" width="1" height="1.2" fill="#555"/><text x="480.5" y="12" font-size="11.5" fill="#444" text-anchor="middle" font-family="Liberation Sans">3</text><rect x="495" y="7.5" width="1" height="1.2" fill="#555"/><rect x="510" y="7.5" width="1" height="1.2" fill="#555"/><rect x="525" y="7.5" width="1" height="1.2" fill="#555"/><rect x="540" y="5" width="1" height="6" fill="#555"/><rect x="555" y="7.5" width="1" height="1.2" fill="#555"/><rect x="570" y="7.5" width="1" height="1.2" fill="#555"/><rect x="585" y="7.5" width="1" height="1.2" fill="#555"/><text x="600.5" y="12" font-size="11.5" fill="#444" text-anchor="middle" font-family="Liberation Sans">4</text><rect x="615" y="7.5" width="1" height="1.2" fill="#555"/><rect x="630" y="7.5" width="1" height="1.2" fill="#555"/><rect x="645" y="7.5" width="1" height="1.2" fill="#555"/><rect x="660" y="5" width="1" height="6" fill="#555"/><rect x="675" y="7.5" width="1" height="1.2" fill="#555"/><rect x="690" y="7.5" width="1" height="1.2" fill="#555"/><rect x="705" y="7.5" width="1" height="1.2" fill="#555"/><text x="720.5" y="12" font-size="11.5" fill="#444" text-anchor="middle" font-family="Liberation Sans">5</text><rect x="735" y="7.5" width="1" height="1.2" fill="#555"/><rect x="750" y="7.5" width="1" height="1.2" fill="#555"/><rect x="765" y="7.5" width="1" height="1.2" fill="#555"/><rect x="780" y="5" width="1" height="6" fill="#555"/><rect x="795" y="7.5" width="1" height="1.2" fill="#555"/><rect x="810" y="7.5" width="1" height="1.2" fill="#555"/><rect x="825" y="7.5" width="1" height="1.2" fill="#555"/><text x="840.5" y="12" font-size="11.5" fill="#444" text-anchor="middle" font-family="Liberation Sans">6</text><rect x="855" y="7.5" width="1" height="1.2" fill="#555"/><rect x="870" y="7.5" width="1" height="1.2" fill="#555"/><rect x="885" y="7.5" width="1" height="1.2" fill="#555"/><rect x="900" y="5" width="1" height="6" fill="#555"/><rect x="915" y="7.5" width="1" height="1.2" fill="#555"/><rect x="930" y="7.5" width="1" height="1.2" fill="#555"/><rect x="945" y="7.5" width="1" height="1.2" fill="#555"/><text x="960.5" y="12" font-size="11.5" fill="#444" text-anchor="middle" font-family="Liberation Sans">7</text><rect x="975" y="7.5" width="1" height="1.2" fill="#555"/><rect x="990" y="7.5" width="1" height="1.2" fill="#555"/><rect x="1005" y="7.5" width="1" height="1.2" fill="#555"/></svg>
<svg style="left:333px;top:240px;" width="20" height="16" viewBox="0 0 20 16"><text x="-2.5" y="12.8" font-size="11.5" fill="#444" font-family="Liberation Sans">1</text></svg>
<svg style="left:447.5px;top:237px;" width="12" height="29" viewBox="0 0 12 29"><path d="M0.8,0.8 H10.8 V4.5 L5.8,9.5 L0.8,4.5 Z" fill="#fff" stroke="#808080" stroke-width="0.9"/><path d="M5.8,10.5 L10.8,15.5 V20.5 H0.8 V15.5 Z" fill="#fff" stroke="#808080" stroke-width="0.9"/><rect x="0.8" y="20.5" width="10" height="7" fill="#fff" stroke="#808080" stroke-width="0.9"/></svg>
<svg style="left:1227px;top:248px;" width="12" height="12" viewBox="0 0 12 12"><path d="M6,1 L11,6.5 V10.5 H1 V6.5 Z" fill="#fff" stroke="#777" stroke-width="0.8"/></svg>
<div class="a" style="left:334px;top:265px;width:1020px;height:546px;background:#fff;border:1px solid #c6c6c6;border-top:none"></div>
<div class="t" style="left:249.00px;width:1200px;text-align:center;top:265.20px;font-size:9.8px;color:#444;font-weight:400;">Powered by</div>
<svg style="left:781px;top:276.5px;" width="26" height="19" viewBox="0 0 29 21"><path d="M4.8,20.5 V14 C4.8,7.5 9,3.8 14.5,3.8 C20,3.8 24.2,7.5 24.2,14 V20.5 H20.6 C20.2,17 20.2,14.5 20.6,10.8 C20,8.6 18,8 16.5,8.6 L14.5,10.2 L12.5,8.6 C11,8 9,8.6 8.4,10.8 C8.8,14.5 8.8,17 8.4,20.5 Z" fill="#00bf6f"/><circle cx="3.4" cy="15" r="3.4" fill="#00bf6f"/><circle cx="25.6" cy="15" r="3.4" fill="#00bf6f"/><circle cx="3.2" cy="15" r="1.1" fill="#fff"/><circle cx="25.8" cy="15" r="1.1" fill="#fff"/><path d="M13,4.5 L11.3,1.8 M14.3,4.2 C15,2.3 16.3,1.2 18.3,0.8" fill="none" stroke="#00bf6f" stroke-width="1.3"/></svg>
<div class="t" style="left:815.00px;top:280.73px;font-size:14.5px;color:#1cb86c;font-weight:400;-webkit-text-stroke:0.35px #1cb86c">SurveyMonkey</div>
<div class="t" style="left:910.00px;top:281.61px;font-size:4px;color:#00bf6f;font-weight:400;">®</div>
<div class="t" style="left:766.80px;top:301.62px;font-size:9.9px;color:#333;font-weight:400;">See how easy it is to <u>create a survey</u>.</div>
<div class="t" style="left:33.50px;width:1200px;text-align:right;top:667.78px;font-size:16.8px;color:#7f7f7f;font-weight:400;">Introduction to Laboratory Safety for Non-Laboratory Staff at CDC</div>
<div class="t" style="left:33.50px;width:1200px;text-align:right;top:689.28px;font-size:16.8px;color:#7f7f7f;font-weight:400;letter-spacing:-0.2px;">eLearning Course Evaluation Survey</div>
<div class="t" style="left:33.50px;width:1200px;text-align:right;top:712.28px;font-size:16.8px;color:#7f7f7f;font-weight:400;">2</div>
<div class="a" style="left:334px;top:830px;width:1020px;height:200px;background:#fff;border:1px solid #c6c6c6"></div>
<div class="a" style="left:5px;top:829px;width:17px;height:178px;background:#fff"></div>
<div class="a" style="left:5px;top:829px;width:17px;height:122.5px;background:#c8c6c4"></div>
<svg style="left:5px;top:829px;" width="17" height="178" viewBox="0 0 17 178"><text x="8.5" y="0" font-size="11" fill="#444" text-anchor="middle" transform="translate(0,4) rotate(-90 8.5 0)" font-family="Liberation Sans"></text><rect x="6" y="1" width="6" height="1.2" fill="#444"/><rect x="10" y="0" width="1.2" height="4" fill="#444"/><rect x="8.5" y="16" width="1.2" height="1" fill="#444"/><rect x="8.5" y="31" width="1.2" height="1" fill="#444"/><rect x="8.5" y="46" width="1.2" height="1" fill="#444"/><rect x="5" y="61" width="6" height="1" fill="#444"/><rect x="8.5" y="76" width="1.2" height="1" fill="#444"/><rect x="8.5" y="91" width="1.2" height="1" fill="#444"/><rect x="8.5" y="106" width="1.2" height="1" fill="#444"/><rect x="8.5" y="136" width="1.2" height="1" fill="#444"/><rect x="8.5" y="151" width="1.2" height="1" fill="#444"/><rect x="8.5" y="166" width="1.2" height="1" fill="#444"/></svg>
<div class="a" style="left:0px;top:1007px;width:1680px;height:27px;background:#f3f2f1;border-top:1px solid #d2d0ce"></div>
<div class="t" style="left:10.30px;top:1015.00px;font-size:13px;color:#444;font-weight:400;">Page 3 of 3</div>
<div class="t" style="left:115.00px;top:1015.00px;font-size:13px;color:#444;font-weight:400;">0 words</div>
<svg style="left:186px;top:1014px;" width="18" height="16" viewBox="0 0 18 16"><path d="M1,1 C4,0 7,1 9,2.5 C11,1 14,0 17,1 V13 C14,12 11,12.5 9,14 C7,12.5 4,12 1,13 Z M9,2.5 V14" fill="none" stroke="#444" stroke-width="1.1"/><path d="M10,10 L12.5,13 L17,7" fill="none" stroke="#444" stroke-width="1.2"/></svg>
<svg style="left:232px;top:1013px;" width="14" height="17" viewBox="0 0 14 17"><path d="M1,1 H9 L13,5 V16 H1 Z" fill="none" stroke="#444" stroke-width="1.1"/><path d="M3,12 L10,6 M6,13 L11,9" stroke="#444" stroke-width="1"/></svg>
<div class="t" style="left:251.00px;top:1015.00px;font-size:13px;color:#444;font-weight:400;">General</div>
<svg style="left:320.6px;top:1012px;" width="18" height="18" viewBox="0 0 18 18"><circle cx="8" cy="2.5" r="2" fill="none" stroke="#444" stroke-width="1.1"/><path d="M1,6 H15 M8,6 V11 L4,17 M8,11 L11,14 M11,11 L17,17 M17,11 L11,17" fill="none" stroke="#444" stroke-width="1.1"/></svg>
<div class="t" style="left:343.00px;top:1015.29px;font-size:12.65px;color:#444;font-weight:400;">Accessibility: Investigate</div>
<svg style="left:1105px;top:1012px;" width="18" height="16" viewBox="0 0 18 16"><path d="M8,13 H1 V1 H17 V6" fill="none" stroke="#444" stroke-width="1.1"/><path d="M5,16 H9" stroke="#444" stroke-width="1.1"/><circle cx="13" cy="11.5" r="3" fill="none" stroke="#444" stroke-width="1.6" stroke-dasharray="1.5,1"/></svg>
<div class="t" style="left:1126.00px;top:1015.00px;font-size:13px;color:#444;font-weight:400;">Display Settings</div>
<svg style="left:1239px;top:1011px;" width="18" height="18" viewBox="0 0 18 18"><path d="M1,5 V1 H5 M13,1 H17 V5 M17,13 V17 H13 M5,17 H1 V13" fill="none" stroke="#444" stroke-width="1.1"/><path d="M5,4 H10 L13,7 V14 H5 Z" fill="none" stroke="#444" stroke-width="1.1"/></svg>
<div class="t" style="left:1260.00px;top:1015.00px;font-size:13px;color:#444;font-weight:400;">Focus</div>
<svg style="left:1324px;top:1012px;" width="17" height="15" viewBox="0 0 17 15"><path d="M1,1 H7 C8,1 8.5,2 8.5,3 C8.5,2 9,1 10,1 H16 V14 H10 L8.5,15 L7,14 H1 Z M8.5,3 V14" fill="none" stroke="#444" stroke-width="1.1"/><path d="M3,5 H6 M3,8 H6 M11,5 H14 M11,8 H14" stroke="#444"/></svg>
<div class="a" style="left:1358px;top:1008px;width:50px;height:26px;background:#c8c6c4"></div>
<svg style="left:1375px;top:1012px;" width="14" height="17" viewBox="0 0 14 17"><rect x="0.6" y="0.6" width="13" height="15.5" fill="none" stroke="#444" stroke-width="1.1"/><path d="M3,4 H11 M3,6.5 H11 M3,9 H11 M3,11.5 H11" stroke="#444"/></svg>
<svg style="left:1424px;top:1012px;" width="19" height="18" viewBox="0 0 19 18"><path d="M9,15 H1 V1 H15 V7" fill="none" stroke="#444" stroke-width="1.1"/><path d="M3,4 H13 M3,6.5 H8 M3,9 H7" stroke="#444"/><circle cx="13.5" cy="12.5" r="4.5" fill="#f3f2f1" stroke="#444" stroke-width="1.1"/><path d="M9,12.5 H18 M13.5,8 V17" stroke="#444" stroke-width="0.8"/></svg>
<div class="a" style="left:1465.5px;top:1020px;width:9.5px;height:1.2px;background:#444"></div>
<div class="a" style="left:1480.6px;top:1020px;width:124.4px;height:1px;background:#666"></div>
<div class="a" style="left:1540.7px;top:1014px;width:6.3px;height:13px;background:#333"></div>
<svg style="left:1612px;top:1015.5px;" width="10" height="10" viewBox="0 0 10 10"><path d="M5,0 V10 M0,5 H10" stroke="#444" stroke-width="1.1"/></svg>
<div class="t" style="left:1638.60px;top:1015.67px;font-size:12.2px;color:#444;font-weight:400;">100%</div>
<div class="a" style="left:0px;top:1034px;width:1680px;height:50px;background:linear-gradient(90deg,#463d54 0%,#44405a 40%,#43445a 75%,#47405a 88%,#4b3c54 95%,#48405a 100%)"></div>
<svg style="left:20px;top:1049px;" width="21" height="21" viewBox="0 0 21 21"><path d="M0,3 L9,1.8 V9.8 H0 Z M10,1.6 L21,0 V9.8 H10 Z M0,11 H9 V19 L0,18 Z M10,11 H21 V21 L10,19.3 Z" fill="#fff"/></svg>
<svg style="left:79px;top:1044px;" width="30" height="30" viewBox="0 0 30 30"><ellipse cx="13" cy="9" rx="12" ry="7" fill="#f5f5f5" stroke="#e0484b" stroke-width="1.4" transform="rotate(-15 13 9)"/><ellipse cx="10" cy="14" rx="8" ry="3" fill="#a3a3a3"/><path d="M13,3 L16,17 M20,3 L14,17" stroke="#555" stroke-width="1"/><circle cx="13" cy="23" r="3.5" fill="none" stroke="#1e88d8" stroke-width="2"/><circle cx="22" cy="24" r="3.5" fill="none" stroke="#1e88d8" stroke-width="2"/><path d="M14,19 L17,13 M21,20 L17,13" stroke="#1e88d8" stroke-width="1.8"/></svg>
<svg style="left:140px;top:1043px;" width="32" height="32" viewBox="0 0 32 32"><defs><linearGradient id="eg140a" x1="0" y1="1" x2="1" y2="0"><stop offset="0" stop-color="#1b7fd6"/><stop offset="0.45" stop-color="#35c1f1"/><stop offset="1" stop-color="#6ae38a"/></linearGradient><linearGradient id="eg140b" x1="0" y1="0" x2="1" y2="1"><stop offset="0" stop-color="#0c59a4"/><stop offset="1" stop-color="#114a8b"/></linearGradient></defs><path d="M2.5,17 C2.5,8 9,1.5 17,1.5 C25,1.5 30.5,7.5 30.5,14 C30.5,18.5 27.5,21 23,21 C18,21 14,20 14,17 C14,15 16,13.5 19,13.5 C17,10 13.5,9 10.5,10 C6,11.5 4,16 5.5,22 Z" fill="url(#eg140a)"/><path d="M5.5,22 C7.5,28 13,31 18.5,30.5 C23,30 26.5,27.5 28.5,24.5 C24,26.5 18.5,26 15.5,23.5 C14,22 14,19.5 14,17 C11,19 8,22 5.5,22 Z" fill="url(#eg140b)"/><rect x="0.5" y="20" width="13.5" height="11.5" rx="1.5" fill="#e69a1f"/><rect x="4.5" y="17" width="5" height="3.2" fill="none" stroke="#e69a1f" stroke-width="1.3"/><rect x="0.5" y="24" width="13.5" height="1" fill="#b86e0b"/><rect x="6.5" y="23.5" width="1.5" height="2" fill="#fff3c0"/></svg>
<svg style="left:202px;top:1045px;" width="31" height="30" viewBox="0 0 31 30"><circle cx="17" cy="5" r="4.5" fill="#7b83eb"/><circle cx="26" cy="7" r="3" fill="#5059c9"/><path d="M10,11 H25 V22 a7.5,7.5 0 0 1 -15,0 Z" fill="#7b83eb"/><path d="M21,11 H30 V20 a5,5 0 0 1 -9,0 Z" fill="#5059c9"/><rect x="0" y="10" width="16" height="16" rx="1.5" fill="#4b53bc"/><text x="8" y="23" font-size="12" font-weight="700" fill="#fff" text-anchor="middle" font-family="Liberation Sans">T</text></svg>
<svg style="left:264px;top:1045px;" width="30" height="28" viewBox="0 0 30 28"><rect x="9" y="0" width="20" height="27" rx="2" fill="#0364b8"/><rect x="18" y="0" width="11" height="12" fill="#28a8ea"/><rect x="9" y="12" width="20" height="15" fill="#1490df"/><path d="M9,14 L19,21 L29,14 V27 H9 Z" fill="#28a8ea"/><rect x="0" y="6" width="16" height="16" rx="1.5" fill="#0078d4"/><text x="8" y="19" font-size="12" font-weight="700" fill="#fff" text-anchor="middle" font-family="Liberation Sans">O</text></svg>
<svg style="left:328px;top:1046px;" width="28" height="24" viewBox="0 0 28 24"><path d="M0,3 a2,2 0 0 1 2,-2 H9 L12,4 H26 a2,2 0 0 1 2,2 V22 a2,2 0 0 1 -2,2 H2 a2,2 0 0 1 -2,-2 Z" fill="#f4c44a"/><rect x="0" y="7" width="28" height="17" rx="2" fill="#fcd767"/><path d="M7,23 V16 H21 V23" fill="none" stroke="#2b88d8" stroke-width="3.5"/></svg>
<svg style="left:389px;top:1045px;" width="30" height="28" viewBox="0 0 30 28"><rect x="8" y="0" width="21" height="27" rx="2" fill="#ca64ea"/><rect x="20" y="6" width="9" height="7" fill="#ae4bd5"/><rect x="20" y="13" width="9" height="7" fill="#9332bf"/><rect x="20" y="20" width="9" height="7" fill="#7719aa"/><rect x="0" y="6" width="16" height="16" rx="1.5" fill="#7719aa"/><text x="8" y="19" font-size="12" font-weight="700" fill="#fff" text-anchor="middle" font-family="Liberation Sans">N</text></svg>
<svg style="left:451px;top:1045px;" width="30" height="28" viewBox="0 0 30 28"><rect x="7" y="0" width="22" height="27" rx="2" fill="#21a366"/><rect x="18" y="0" width="11" height="9" fill="#33c481"/><rect x="7" y="9" width="22" height="9" fill="#107c41"/><rect x="7" y="18" width="22" height="9" fill="#185c37"/><rect x="0" y="6" width="16" height="16" rx="1.5" fill="#107c41"/><text x="8" y="19" font-size="12" font-weight="700" fill="#fff" text-anchor="middle" font-family="Liberation Sans">X</text></svg>
<div class="a" style="left:498px;top:1034px;width:56px;height:50px;background:#6a5a8a"></div>
<div class="a" style="left:554px;top:1034px;width:2px;height:50px;background:#554a6e"></div>
<svg style="left:512px;top:1045px;" width="30" height="28" viewBox="0 0 30 28"><rect x="7" y="0" width="22" height="27" rx="2" fill="#41a5ee"/><rect x="7" y="7" width="22" height="7" fill="#2b7cd3"/><rect x="7" y="14" width="22" height="7" fill="#185abd"/><rect x="7" y="21" width="22" height="6" fill="#103f91"/><rect x="0" y="6" width="16" height="16" rx="1.5" fill="#185abd"/><text x="8" y="19" font-size="11" font-weight="700" fill="#fff" text-anchor="middle" font-family="Liberation Sans">W</text></svg>
<div class="a" style="left:131px;top:1081px;width:51px;height:3px;background:#c9a4f2"></div>
<div class="a" style="left:193px;top:1081px;width:51px;height:3px;background:#c9a4f2"></div>
<div class="a" style="left:255px;top:1081px;width:40px;height:3px;background:#c9a4f2"></div>
<div class="a" style="left:317px;top:1081px;width:40px;height:3px;background:#c9a4f2"></div>
<div class="a" style="left:379px;top:1081px;width:51px;height:3px;background:#c9a4f2"></div>
<div class="a" style="left:441px;top:1081px;width:51px;height:3px;background:#c9a4f2"></div>
<div class="a" style="left:498px;top:1081px;width:56px;height:3px;background:#c9a4f2"></div>
<div class="a" style="left:296px;top:1081px;width:10px;height:3px;background:#9a7ac4"></div>
<div class="a" style="left:358px;top:1081px;width:10px;height:3px;background:#9a7ac4"></div>
<svg style="left:1342px;top:1052px;" width="16" height="10" viewBox="0 0 16 10"><path d="M1,9 L8,2 L15,9" fill="none" stroke="#fff" stroke-width="1.3"/></svg>
<svg style="left:1380px;top:1052px;" width="21" height="14" viewBox="0 0 21 14"><rect x="4" y="3" width="15" height="10" fill="none" stroke="#fff" stroke-width="1.3"/><rect x="19" y="6" width="2" height="4" fill="#fff"/><path d="M3,0 V4 M1,1.5 H5 M3,4 V8 M3,8 H5" stroke="#fff" stroke-width="1.2"/></svg>
<svg style="left:1420px;top:1051px;" width="21" height="17" viewBox="0 0 21 17"><path d="M3,12 a4,4 0 0 1 2,-7 a6,6 0 0 1 11,1 a4,4 0 0 1 1,6 Z" fill="#2b88d8"/><circle cx="15" cy="12" r="5" fill="#1e6fd9" stroke="#fff" stroke-width="1"/><path d="M12.5,11.5 a2.5,2.5 0 0 1 5,0 M17.5,12.5 a2.5,2.5 0 0 1 -5,0" fill="none" stroke="#fff" stroke-width="1"/></svg>
<svg style="left:1463px;top:1052px;" width="16" height="16" viewBox="0 0 16 16"><path d="M1,8 a10,10 0 0 1 14,-5 M3.5,11 a7,7 0 0 1 10,-4 M6.5,13.5 a3.5,3.5 0 0 1 5,-2.5" fill="none" stroke="#fff" stroke-width="1.2"/><circle cx="13.5" cy="14" r="1.5" fill="#fff"/></svg>
<svg style="left:1499px;top:1052px;" width="20" height="15" viewBox="0 0 20 15"><path d="M1,5 H4 L9,1 V14 L4,10 H1 Z" fill="none" stroke="#fff" stroke-width="1.1"/><path d="M12,4.5 L19,11 M19,4.5 L12,11" stroke="#fff" stroke-width="1.2"/></svg>
<div class="t" style="left:972.00px;width:1200px;text-align:center;top:1041.54px;font-size:13.3px;color:#fff;font-weight:400;">3:10 PM</div>
<div class="t" style="left:972.00px;width:1200px;text-align:center;top:1064.14px;font-size:13.3px;color:#fff;font-weight:400;">10/31/2023</div>
<svg style="left:1629px;top:1049px;" width="21" height="20" viewBox="0 0 21 20"><path d="M0.7,0.7 H20 V14 H13 L10.5,18 L8,14 H0.7 Z" fill="none" stroke="#fff" stroke-width="1.2"/></svg>
<div class="a" style="left:1674px;top:1034px;width:1px;height:50px;background:#8a8494"></div>
<div class="a" style="left:1680px;top:0px;width:1920px;height:1080px;background:#7035ad"></div>
<div class="a" style="left:1680px;top:0px;width:1920px;height:32px;background:#47216f"></div>
<div class="a" style="left:2006px;top:0px;width:240px;height:34px;background:#7035ad;border-radius:7px 7px 0 0"></div>
<svg style="left:1690px;top:3.8px;" width="24" height="24" viewBox="0 0 30 30"><defs><clipPath id="av2"><circle cx="15" cy="15" r="15"/></clipPath></defs><g clip-path="url(#av2)"><rect width="30" height="30" fill="#ebe7df"/><rect x="18" y="0" width="12" height="30" fill="#c9bb9c"/><circle cx="24" cy="12" r="1.5" fill="#8a7a5a"/><circle cx="26" cy="20" r="1.3" fill="#8a7a5a"/><circle cx="5" cy="10" r="0.8" fill="#a04030"/><path d="M6,30 V9.5 C6,3.5 9.5,1.3 13.5,1.3 C18,1.3 21.5,4 21.5,10 V30 Z" fill="#161112"/><path d="M2,30 C3,24.5 6.5,22.5 10.5,22.5 H16.5 C20.5,22.5 24.5,24.5 27.5,30 Z" fill="#1d1d2b"/><path d="M3,25 L8,23 L9,29 L4,30 Z" fill="#c6d2ee"/><path d="M21,23.5 L26,25 L25.5,29 L21.5,28.5 Z" fill="#c6d2ee"/><rect x="11" y="16" width="5" height="7" fill="#d9ae94"/><ellipse cx="13.6" cy="11.6" rx="5.3" ry="7" fill="#eac3a8"/><path d="M8.3,8 C9,4.5 11,3.5 13.8,3.5 C16.5,3.5 18.5,5 19,8 C17,6 11,6 8.3,8 Z" fill="#161112"/><path d="M6,14 V30 H10 V17 Z M17.5,17 V30 H21.5 V14 Z" fill="#161112"/></g></svg>
<svg style="left:1733px;top:7px;" width="18" height="18" viewBox="0 0 18 18"><path d="M1,14 V5 a3,3 0 0 1 3,-3 M3.5,15.5 V6.5 a3,3 0 0 1 3,-3 H9" fill="none" stroke="#fff" stroke-width="1.1"/><path d="M6,8 L14,5 a2,2 0 0 1 3,2 V14 L9,17 a2,2 0 0 1 -3,-2 Z" fill="none" stroke="#fff" stroke-width="1.1"/></svg>
<svg style="left:1778px;top:8px;" width="16" height="16" viewBox="0 0 16 16"><circle cx="8" cy="8" r="8" fill="#00bf6f"/><g transform="translate(2.2,3.3) scale(0.4)"><path d="M4.8,20.5 V14 C4.8,7.5 9,3.8 14.5,3.8 C20,3.8 24.2,7.5 24.2,14 V20.5 H20.6 C20.2,17 20.2,14.5 20.6,10.8 C20,8.6 18,8 16.5,8.6 L14.5,10.2 L12.5,8.6 C11,8 9,8.6 8.4,10.8 C8.8,14.5 8.8,17 8.4,20.5 Z" fill="#fff"/><circle cx="3.4" cy="15" r="3.4" fill="#fff"/><circle cx="25.6" cy="15" r="3.4" fill="#fff"/><circle cx="3.2" cy="15" r="1.1" fill="#00bf6f"/><circle cx="25.8" cy="15" r="1.1" fill="#00bf6f"/><path d="M13,4.5 L11.3,1.8 M14.3,4.2 C15,2.3 16.3,1.2 18.3,0.8" fill="none" stroke="#fff" stroke-width="1.3"/></g></svg>
<div class="t" style="left:1804.00px;top:9.90px;font-size:11.7px;color:#f2eefa;font-weight:400;">SurveyMonkey Design :</div>
<svg style="left:1986px;top:11px;" width="10" height="10" viewBox="0 0 10 10"><path d="M0.5,0.5 L9.5,9.5 M9.5,0.5 L0.5,9.5" stroke="#fff" stroke-width="1.1"/></svg>
<svg style="left:2017px;top:8px;" width="16" height="16" viewBox="0 0 16 16"><circle cx="8" cy="8" r="8" fill="#00bf6f"/><g transform="translate(2.2,3.3) scale(0.4)"><path d="M4.8,20.5 V14 C4.8,7.5 9,3.8 14.5,3.8 C20,3.8 24.2,7.5 24.2,14 V20.5 H20.6 C20.2,17 20.2,14.5 20.6,10.8 C20,8.6 18,8 16.5,8.6 L14.5,10.2 L12.5,8.6 C11,8 9,8.6 8.4,10.8 C8.8,14.5 8.8,17 8.4,20.5 Z" fill="#fff"/><circle cx="3.4" cy="15" r="3.4" fill="#fff"/><circle cx="25.6" cy="15" r="3.4" fill="#fff"/><circle cx="3.2" cy="15" r="1.1" fill="#00bf6f"/><circle cx="25.8" cy="15" r="1.1" fill="#00bf6f"/><path d="M13,4.5 L11.3,1.8 M14.3,4.2 C15,2.3 16.3,1.2 18.3,0.8" fill="none" stroke="#fff" stroke-width="1.3"/></g></svg>
<div class="t" style="left:2042.50px;top:9.90px;font-size:11.7px;color:#f2eefa;font-weight:400;">SurveyMonkey Design :</div>
<svg style="left:2225px;top:11px;" width="10" height="10" viewBox="0 0 10 10"><path d="M0.5,0.5 L9.5,9.5 M9.5,0.5 L0.5,9.5" stroke="#fff" stroke-width="1.1"/></svg>
<svg style="left:2257px;top:9px;" width="14" height="14" viewBox="0 0 14 14"><path d="M7,0 V14 M0,7 H14" stroke="#fff" stroke-width="1.2"/></svg>
<div class="a" style="left:3480px;top:16px;width:10px;height:1.2px;background:#fff"></div>
<svg style="left:3526px;top:11px;" width="11" height="11" viewBox="0 0 11 11"><path d="M3,2.5 V2 a1.5,1.5 0 0 1 1.5,-1.5 H9 a1.5,1.5 0 0 1 1.5,1.5 V6.5 a1.5,1.5 0 0 1 -1.5,1.5" fill="none" stroke="#fff" stroke-width="1"/><rect x="0.5" y="3" width="7.5" height="7.5" rx="1.2" fill="none" stroke="#fff" stroke-width="1"/></svg>
<svg style="left:3571px;top:11px;" width="11" height="11" viewBox="0 0 11 11"><path d="M0.5,0.5 L10.5,10.5 M10.5,0.5 L0.5,10.5" stroke="#fff" stroke-width="1.1"/></svg>
<svg style="left:1700px;top:44px;" width="17" height="14" viewBox="0 0 17 14"><path d="M16,7 H1.5 M7.5,1 L1.2,7 L7.5,13" fill="none" stroke="#fff" stroke-width="1.2"/></svg>
<svg style="left:1745px;top:43px;" width="16" height="16" viewBox="0 0 16 16"><path d="M14,8 A6.5,6.5 0 1 1 11.5,2.8 M12,0.5 V3.5 H9" fill="none" stroke="#fff" stroke-width="1.2"/></svg>
<svg style="left:1789px;top:43px;" width="15" height="16" viewBox="0 0 15 16"><path d="M1,15 V6.5 L7.5,1 L14,6.5 V15 H10 V11 a2.5,2.5 0 0 0 -5,0 V15 Z" fill="none" stroke="#fff" stroke-width="1.2"/></svg>
<div class="a" style="left:1824px;top:36px;width:1411px;height:30px;background:#572a90;border-radius:15px"></div>
<svg style="left:1844px;top:43px;" width="12" height="15" viewBox="0 0 12 15"><path d="M3,6.5 V4.5 a3,3 0 0 1 6,0 V6.5" fill="none" stroke="#fff" stroke-width="1.2"/><rect x="0.6" y="6.5" width="10.8" height="8" rx="1" fill="none" stroke="#fff" stroke-width="1.2"/><circle cx="6" cy="10.5" r="1" fill="#fff"/></svg>
<div class="t" style="left:1873.00px;top:44.29px;font-size:13.6px;color:#000;font-weight:400;"><span style="color:#c4b6d6">https://</span><span style="color:#fff">www.surveymonkey.com</span><span style="color:#c4b6d6">/create/preview/?sm=R57RXa7O033S4_2Bb_2B07OgZ5dtgAuQ1_2FAdKq15tSbA2Ow_3D</span></div>
<svg style="left:3082px;top:43px;" width="16" height="16" viewBox="0 0 16 16"><circle cx="6.5" cy="6.5" r="5.5" fill="none" stroke="#c6b8d8" stroke-width="1.1"/><path d="M4,6.5 H9 M10.5,10.5 L15,15" stroke="#c6b8d8" stroke-width="1.1"/></svg>
<svg style="left:3121px;top:43px;" width="17" height="17" viewBox="0 0 17 17"><path d="M9,1 H15.5 V7.5 L7,16 L0.8,9.5 Z" fill="none" stroke="#c6b8d8" stroke-width="1.1" stroke-linejoin="round"/><circle cx="12" cy="4.5" r="1.1" fill="#c6b8d8"/></svg>
<div class="t" style="left:3162.00px;top:44.80px;font-size:15px;color:#c6b8d8;font-weight:400;">A</div>
<svg style="left:3174px;top:42px;" width="6" height="8" viewBox="0 0 6 8"><path d="M1,7 a4,4 0 0 0 1,-6 M3.5,7.5 a6,6 0 0 0 1.5,-8" fill="none" stroke="#c6b8d8" stroke-width="1"/></svg>
<svg style="left:3202px;top:43px;" width="16" height="16" viewBox="0 0 16 16"><path d="M8,0.8 L10.2,5.6 L15.3,6 L11.4,9.4 L12.6,14.6 L8,11.9 L3.4,14.6 L4.6,9.4 L0.7,6 L5.8,5.6 Z" fill="none" stroke="#c6b8d8" stroke-width="1.1" stroke-linejoin="round"/></svg>
<div class="a" style="left:3255px;top:43px;width:16px;height:16px;background:#3b1530;border-radius:3px"></div>
<svg style="left:3258px;top:46px;" width="10" height="10" viewBox="0 0 10 10"><rect x="1" y="3" width="8" height="5" fill="none" stroke="#e8d8e8" stroke-width="0.9"/><rect x="2.5" y="0.5" width="5" height="2.5" fill="none" stroke="#e8d8e8" stroke-width="0.9"/><rect x="2.5" y="6" width="5" height="3.5" fill="#e8d8e8"/></svg>
<svg style="left:3299px;top:43px;" width="16" height="16" viewBox="0 0 16 16"><path d="M6,2 a2,2 0 0 1 4,0 V3 H13 V6 a2,2 0 0 1 0,4 V14 H9.5 a2,2 0 0 0 -4,0 H2 V10 a2,2 0 0 0 0,-4 V3 H6 Z" fill="none" stroke="#fff" stroke-width="1.1"/></svg>
<div class="a" style="left:3331px;top:44px;width:1px;height:15px;background:#9a79c8"></div>
<svg style="left:3347px;top:44px;" width="16" height="14" viewBox="0 0 16 14"><rect x="0.6" y="0.6" width="14.8" height="12.8" rx="2" fill="none" stroke="#fff" stroke-width="1.1"/><path d="M8,0 V14" stroke="#fff" stroke-width="1.1"/></svg>
<svg style="left:3392px;top:43px;" width="17" height="16" viewBox="0 0 17 16"><path d="M6,0.8 L7.8,4.8 L12,5.2 L8.8,8 L9.8,12.5 L6,10.2 L2.2,12.5 L3.2,8 L0.2,5.2 L4.4,4.8 Z" fill="none" stroke="#fff" stroke-width="1.1" stroke-linejoin="round"/><path d="M11,9 H17 M12,12 H17 M11,15 H17" stroke="#fff" stroke-width="1"/></svg>
<svg style="left:3436px;top:43px;" width="17" height="17" viewBox="0 0 17 17"><path d="M1,11 V4 a3,3 0 0 1 3,-3 H11" fill="none" stroke="#fff" stroke-width="1.1"/><rect x="4" y="4" width="12.5" height="12.5" rx="2.5" fill="none" stroke="#fff" stroke-width="1.1"/><path d="M10.25,7 V13.5 M7,10.25 H13.5" stroke="#fff" stroke-width="1.1"/></svg>
<svg style="left:3480px;top:43px;" width="16" height="16" viewBox="0 0 16 16"><path d="M8,0 V11.5 M3,7 L8,12 L13,7 M1,15.5 H15" fill="none" stroke="#fff" stroke-width="1.1"/></svg>
<svg style="left:3523px;top:43px;" width="19" height="17" viewBox="0 0 19 17"><path d="M8,15 L2,9 a4.2,4.2 0 0 1 6,-6 a4.2,4.2 0 0 1 6,6 M1,8 H5 L7,5 L9,10 L11,8 H12" fill="none" stroke="#fff" stroke-width="1.1"/><circle cx="14" cy="13" r="3.5" fill="#fff"/><path d="M12.5,14 L15.5,11.5" stroke="#5a2a90" stroke-width="1"/></svg>
<svg style="left:3569px;top:49px;" width="14" height="3" viewBox="0 0 14 3"><circle cx="1.5" cy="1.5" r="1.3" fill="#fff"/><circle cx="7" cy="1.5" r="1.3" fill="#fff"/><circle cx="12.5" cy="1.5" r="1.3" fill="#fff"/></svg>
<svg style="left:1694px;top:79px;" width="15" height="14" viewBox="0 0 15 14"><path d="M0.6,2 a1.4,1.4 0 0 1 1.4,-1.4 H5.5 L7,2 H13 a1.4,1.4 0 0 1 1.4,1.4 V12 a1.4,1.4 0 0 1 -1.4,1.4 H2 a1.4,1.4 0 0 1 -1.4,-1.4 Z" fill="#fcd86b" stroke="#c89a12" stroke-width="1"/><path d="M0.6,4 H14.4" stroke="#e5b526" stroke-width="1"/></svg>
<div class="t" style="left:1718.40px;top:79.61px;font-size:11.8px;color:#fff;font-weight:400;">Archive</div>
<svg style="left:1774px;top:79px;" width="15" height="14" viewBox="0 0 15 14"><path d="M0.6,2 a1.4,1.4 0 0 1 1.4,-1.4 H5.5 L7,2 H13 a1.4,1.4 0 0 1 1.4,1.4 V12 a1.4,1.4 0 0 1 -1.4,1.4 H2 a1.4,1.4 0 0 1 -1.4,-1.4 Z" fill="#fcd86b" stroke="#c89a12" stroke-width="1"/><path d="M0.6,4 H14.4" stroke="#e5b526" stroke-width="1"/></svg>
<div class="t" style="left:1798.00px;top:79.61px;font-size:11.8px;color:#fff;font-weight:400;">Admin</div>
<svg style="left:1849px;top:79px;" width="15" height="14" viewBox="0 0 15 14"><path d="M0.6,2 a1.4,1.4 0 0 1 1.4,-1.4 H5.5 L7,2 H13 a1.4,1.4 0 0 1 1.4,1.4 V12 a1.4,1.4 0 0 1 -1.4,1.4 H2 a1.4,1.4 0 0 1 -1.4,-1.4 Z" fill="#fcd86b" stroke="#c89a12" stroke-width="1"/><path d="M0.6,4 H14.4" stroke="#e5b526" stroke-width="1"/></svg>
<div class="t" style="left:1873.40px;top:79.61px;font-size:11.8px;color:#fff;font-weight:400;">R studio</div>
<svg style="left:1933px;top:79px;" width="15" height="14" viewBox="0 0 15 14"><path d="M0.6,2 a1.4,1.4 0 0 1 1.4,-1.4 H5.5 L7,2 H13 a1.4,1.4 0 0 1 1.4,1.4 V12 a1.4,1.4 0 0 1 -1.4,1.4 H2 a1.4,1.4 0 0 1 -1.4,-1.4 Z" fill="#fcd86b" stroke="#c89a12" stroke-width="1"/><path d="M0.6,4 H14.4" stroke="#e5b526" stroke-width="1"/></svg>
<div class="t" style="left:1956.70px;top:79.61px;font-size:11.8px;color:#fff;font-weight:400;">CHES</div>
<svg style="left:2002px;top:79px;" width="15" height="14" viewBox="0 0 15 14"><path d="M0.6,2 a1.4,1.4 0 0 1 1.4,-1.4 H5.5 L7,2 H13 a1.4,1.4 0 0 1 1.4,1.4 V12 a1.4,1.4 0 0 1 -1.4,1.4 H2 a1.4,1.4 0 0 1 -1.4,-1.4 Z" fill="#fcd86b" stroke="#c89a12" stroke-width="1"/><path d="M0.6,4 H14.4" stroke="#e5b526" stroke-width="1"/></svg>
<div class="t" style="left:2026.00px;top:79.61px;font-size:11.8px;color:#fff;font-weight:400;">Communications</div>
<svg style="left:2132px;top:79px;" width="15" height="14" viewBox="0 0 15 14"><path d="M0.6,2 a1.4,1.4 0 0 1 1.4,-1.4 H5.5 L7,2 H13 a1.4,1.4 0 0 1 1.4,1.4 V12 a1.4,1.4 0 0 1 -1.4,1.4 H2 a1.4,1.4 0 0 1 -1.4,-1.4 Z" fill="#fcd86b" stroke="#c89a12" stroke-width="1"/><path d="M0.6,4 H14.4" stroke="#e5b526" stroke-width="1"/></svg>
<div class="t" style="left:2155.80px;top:79.61px;font-size:11.8px;color:#fff;font-weight:400;">OLSS</div>
<svg style="left:2199px;top:80px;" width="17" height="11" viewBox="0 0 17 11"><path d="M3,10.5 a3,3 0 0 1 0,-6 a4.5,4.5 0 0 1 8,-1.5 a3.5,3.5 0 0 1 5,3 a2.5,2.5 0 0 1 -0.5,4.5 Z" fill="#1c8ce0"/></svg>
<div class="t" style="left:2223.70px;top:79.61px;font-size:11.8px;color:#fff;font-weight:400;">OneDrive</div>
<svg style="left:3571px;top:85px;" width="12" height="12" viewBox="0 0 12 12"><path d="M6,0 V12 M0,6 H12" stroke="#fff" stroke-width="1.1"/></svg>
<div class="a" style="left:1684px;top:104px;width:1872px;height:932px;background:#fff;border-radius:8px;overflow:hidden">
</div>
<div class="a" style="left:1684px;top:104px;width:1857px;height:38px;background:#333e48;border-top-left-radius:8px"></div>
<svg style="left:1703px;top:114px;" width="30" height="22" viewBox="0 0 30 22"><path d="M4.8,20.5 V14 C4.8,7.5 9,3.8 14.5,3.8 C20,3.8 24.2,7.5 24.2,14 V20.5 H20.6 C20.2,17 20.2,14.5 20.6,10.8 C20,8.6 18,8 16.5,8.6 L14.5,10.2 L12.5,8.6 C11,8 9,8.6 8.4,10.8 C8.8,14.5 8.8,17 8.4,20.5 Z" fill="#fff"/><circle cx="3.4" cy="15" r="3.4" fill="#fff"/><circle cx="25.6" cy="15" r="3.4" fill="#fff"/><circle cx="3.2" cy="15" r="1.1" fill="#333e48"/><circle cx="25.8" cy="15" r="1.1" fill="#333e48"/><path d="M13,4.5 L11.3,1.8 M14.3,4.2 C15,2.3 16.3,1.2 18.3,0.8" fill="none" stroke="#fff" stroke-width="1.3"/></svg>
<div class="t" style="left:1757.40px;top:118.03px;font-size:10.6px;color:#fff;font-weight:700;">Dashboard</div>
<div class="t" style="left:1838.70px;top:118.03px;font-size:10.6px;color:#fff;font-weight:700;">My Surveys</div>
<div class="t" style="left:1922.00px;top:118.03px;font-size:10.6px;color:#fff;font-weight:700;">Plans &amp; Pricing</div>
<div class="a" style="left:3201px;top:110px;width:96px;height:26px;background:#fff;border-radius:3px"></div>
<div class="t" style="left:3213.80px;top:118.02px;font-size:11.2px;color:#333e48;font-weight:400;">Create survey</div>
<svg style="left:3326px;top:114px;" width="19" height="19" viewBox="0 0 19 19"><rect x="0" y="0" width="4.5" height="4.5" rx="0.8" fill="#fff"/><rect x="0" y="7" width="4.5" height="4.5" rx="0.8" fill="#fff"/><rect x="0" y="14" width="4.5" height="4.5" rx="0.8" fill="#fff"/><rect x="7" y="0" width="4.5" height="4.5" rx="0.8" fill="#fff"/><rect x="7" y="7" width="4.5" height="4.5" rx="0.8" fill="#fff"/><rect x="7" y="14" width="4.5" height="4.5" rx="0.8" fill="#fff"/><rect x="14" y="0" width="4.5" height="4.5" rx="0.8" fill="#fff"/><rect x="14" y="7" width="4.5" height="4.5" rx="0.8" fill="#fff"/><rect x="14" y="14" width="4.5" height="4.5" rx="0.8" fill="#fff"/></svg>
<svg style="left:3370px;top:114px;" width="20" height="20" viewBox="0 0 20 20"><circle cx="10" cy="10" r="10" fill="#fff"/><text x="10" y="15" font-size="14" font-weight="700" fill="#333e48" text-anchor="middle" font-family="Liberation Sans">?</text></svg>
<div class="t" style="left:3415.30px;top:119.03px;font-size:10.6px;color:#fff;font-weight:700;">nqb0@cdc.gov</div>
<svg style="left:3498.5px;top:121.5px;" width="10" height="6" viewBox="0 0 10 6"><path d="M0,0 H10 L5,6 Z" fill="#fff"/></svg>
<div class="a" style="left:1684px;top:184px;width:1857px;height:1px;background:#d0d3d5"></div>
<div class="t" style="left:1704.60px;top:158.34px;font-size:9.4px;color:#333e48;font-weight:400;letter-spacing:0.22px;-webkit-text-stroke:0.2px #333e48">SUMMARY</div>
<div class="t" style="left:1785.40px;top:158.34px;font-size:9.4px;color:#333e48;font-weight:400;letter-spacing:0.22px;-webkit-text-stroke:0.2px #333e48">DESIGN SURVEY</div>
<div class="t" style="left:1894.40px;top:158.34px;font-size:9.4px;color:#00bf6f;font-weight:400;letter-spacing:0.22px;-webkit-text-stroke:0.2px #00bf6f">PREVIEW &amp; SCORE</div>
<div class="t" style="left:2013.00px;top:158.34px;font-size:9.4px;color:#333e48;font-weight:400;letter-spacing:0.22px;-webkit-text-stroke:0.2px #333e48">COLLECT RESPONSES</div>
<div class="t" style="left:2148.70px;top:158.34px;font-size:9.4px;color:#333e48;font-weight:400;letter-spacing:0.22px;-webkit-text-stroke:0.2px #333e48">ANALYZE RESULTS</div>
<div class="t" style="left:2269.70px;top:158.34px;font-size:9.4px;color:#333e48;font-weight:400;letter-spacing:0.22px;-webkit-text-stroke:0.2px #333e48">PRESENT RESULTS</div>
<svg style="left:1765px;top:160px;" width="10" height="9" viewBox="0 0 10 9"><path d="M0,4.5 H9 M5,0.5 L9,4.5 L5,8.5" fill="none" stroke="#b5bbbf" stroke-width="1"/></svg>
<svg style="left:1874px;top:160px;" width="10" height="9" viewBox="0 0 10 9"><path d="M0,4.5 H9 M5,0.5 L9,4.5 L5,8.5" fill="none" stroke="#b5bbbf" stroke-width="1"/></svg>
<svg style="left:1993px;top:160px;" width="10" height="9" viewBox="0 0 10 9"><path d="M0,4.5 H9 M5,0.5 L9,4.5 L5,8.5" fill="none" stroke="#b5bbbf" stroke-width="1"/></svg>
<svg style="left:2127.8px;top:160px;" width="10" height="9" viewBox="0 0 10 9"><path d="M0,4.5 H9 M5,0.5 L9,4.5 L5,8.5" fill="none" stroke="#b5bbbf" stroke-width="1"/></svg>
<svg style="left:2249px;top:160px;" width="10" height="9" viewBox="0 0 10 9"><path d="M0,4.5 H9 M5,0.5 L9,4.5 L5,8.5" fill="none" stroke="#b5bbbf" stroke-width="1"/></svg>
<div class="a" style="left:1891.8px;top:181.5px;width:92.2px;height:2.5px;background:#00bf6f"></div>
<div class="a" style="left:3268px;top:151px;width:32px;height:25px;background:#6b787f;border-radius:2px"></div>
<svg style="left:3277px;top:157px;" width="14" height="14" viewBox="0 0 14 14"><path d="M7,1 C3.5,1 1,3 1,5.8 C1,8.2 3,10 5.5,10.3 L6.5,12.8 L8.5,10.2 C11,9.8 13,8 13,5.8 C13,3 10.5,1 7,1 Z" fill="none" stroke="#fff" stroke-width="1.4"/></svg>
<div class="a" style="left:3312px;top:151px;width:128px;height:25px;background:#6b787f;border-radius:2px"></div>
<svg style="left:3322px;top:157px;" width="12" height="13" viewBox="0 0 12 13"><circle cx="5" cy="4.5" r="3" fill="none" stroke="#fff" stroke-width="1.2"/><path d="M0.7,12.5 C0.7,9 2.5,7.5 5,7.5 C7.5,7.5 9.3,9 9.3,12.5 Z" fill="none" stroke="#fff" stroke-width="1.2"/><path d="M10,1 V5 M8,3 H12" stroke="#fff" stroke-width="1"/></svg>
<div class="t" style="left:3342.00px;top:159.62px;font-size:9.9px;color:#fff;font-weight:700;">Add collaborators</div>
<div class="a" style="left:3453px;top:151px;width:69px;height:25px;background:#00bf6f;border-radius:2px"></div>
<div class="t" style="left:3466.00px;top:159.11px;font-size:10.5px;color:#fff;font-weight:700;">NEXT</div>
<svg style="left:3500px;top:158px;" width="12" height="11" viewBox="0 0 12 11"><path d="M0,5.5 H11 M6,0.8 L11,5.5 L6,10.2" fill="none" stroke="#fff" stroke-width="1.3"/></svg>
<div class="t" style="left:2121.30px;top:251.72px;font-size:21px;color:#00802f;font-weight:700;letter-spacing:-0.5px;">Introduction to Laboratory Safety for Non-Laboratory Staff at CDC:</div>
<div class="t" style="left:2121.30px;top:276.82px;font-size:21px;color:#00802f;font-weight:700;letter-spacing:-0.79px;">eLearning Course Evaluation Survey</div>
<div class="t" style="left:2121.30px;top:323.99px;font-size:17.5px;color:#00802f;font-weight:400;letter-spacing:0.85px;">Demographic Information</div>
<div class="t" style="left:2121.00px;top:383.13px;font-size:15.2px;color:#3d4852;font-weight:400;">* 1. What is your Center/Institute/Office (CIO)?</div>
<div class="a" style="left:2121px;top:421px;width:716px;height:30px;background:#fff;border:2px solid #00802f;border-radius:4px"></div>
<svg style="left:2825px;top:429px;" width="9" height="14" viewBox="0 0 9 14"><path d="M0.5,5.5 L4.5,0.5 L8.5,5.5 Z M0.5,8.5 L4.5,13.5 L8.5,8.5 Z" fill="#333"/></svg>
<div class="a" style="left:2122px;top:456px;width:714px;height:285px;background:#fff;box-shadow:0 2px 6px rgba(0,0,0,0.35)"></div>
<div class="a" style="left:2122px;top:456px;width:714px;height:18px;background:#767676"></div>
<div class="t" style="left:2127.00px;top:476.27px;font-size:13.86px;color:#2a2a2a;font-weight:400;">CDC Immediate Office of the Director (IOD)</div>
<div class="t" style="left:2127.00px;top:494.01px;font-size:13.86px;color:#2a2a2a;font-weight:400;">Global Health Center (GHC)</div>
<div class="t" style="left:2127.00px;top:511.75px;font-size:13.86px;color:#2a2a2a;font-weight:400;">National Center for Birth Defects and Developmental Disabilities (NCBDDD)</div>
<div class="t" style="left:2127.00px;top:529.49px;font-size:13.86px;color:#2a2a2a;font-weight:400;">National Center for Chronic Disease Prevention and Health Promotion (NCDPHP)</div>
<div class="t" style="left:2127.00px;top:547.23px;font-size:13.86px;color:#2a2a2a;font-weight:400;">National Center for Emerging and Zoonotic Infectious Diseases (NCEZID)</div>
<div class="t" style="left:2127.00px;top:564.97px;font-size:13.86px;color:#2a2a2a;font-weight:400;">National Center for Environmental Health/Agency for Toxic Substances and Disease Registry (NCEH/ATSDR)</div>
<div class="t" style="left:2127.00px;top:582.71px;font-size:13.86px;color:#2a2a2a;font-weight:400;">National Center for Health Statistics (NCHS)</div>
<div class="t" style="left:2127.00px;top:600.45px;font-size:13.86px;color:#2a2a2a;font-weight:400;">National Center for HIV/AIDS, Viral Hepatitis, STD and TB Prevention (NCHHSTP)</div>
<div class="t" style="left:2127.00px;top:618.19px;font-size:13.86px;color:#2a2a2a;font-weight:400;">National Center for Immunization and Respiratory Diseases (NCIRD)</div>
<div class="t" style="left:2127.00px;top:635.93px;font-size:13.86px;color:#2a2a2a;font-weight:400;">National Center for Injury Prevention and Control (NCIPC)</div>
<div class="t" style="left:2127.00px;top:653.67px;font-size:13.86px;color:#2a2a2a;font-weight:400;">National Institute for Occupational Safety and Health (NIOSH)</div>
<div class="t" style="left:2127.00px;top:671.41px;font-size:13.86px;color:#2a2a2a;font-weight:400;">Office of Public Health Data, Surveillance, and Technology (OPHDST)</div>
<div class="t" style="left:2127.00px;top:689.15px;font-size:13.86px;color:#2a2a2a;font-weight:400;">Office of Readiness and Response (ORR)</div>
<div class="t" style="left:2127.00px;top:706.89px;font-size:13.86px;color:#2a2a2a;font-weight:400;">Public Health Infrastructure Center (PHIC)</div>
<div class="t" style="left:2127.00px;top:724.63px;font-size:13.86px;color:#2a2a2a;font-weight:400;">Other</div>
<div class="a" style="left:3274px;top:184px;width:1px;height:852px;background:#d0d3d5"></div>
<div class="a" style="left:3539px;top:184px;width:1px;height:852px;background:#d0d3d5"></div>
<div class="a" style="left:3406px;top:184px;width:1px;height:51px;background:#d0d3d5"></div>
<div class="a" style="left:3406px;top:234px;width:134px;height:1px;background:#d0d3d5"></div>
<div class="a" style="left:3275px;top:231px;width:131px;height:4px;background:#00bf6f"></div>
<svg style="left:3293px;top:203px;" width="12" height="12" viewBox="0 0 12 12"><circle cx="6" cy="6" r="5.2" fill="none" stroke="#00bf6f" stroke-width="1.6"/><circle cx="6" cy="6" r="2.6" fill="none" stroke="#00bf6f" stroke-width="1.6"/></svg>
<div class="t" style="left:3310.00px;top:204.71px;font-size:9.2px;color:#00bf6f;font-weight:700;">SCORE SURVEY</div>
<svg style="left:3424.5px;top:203px;" width="12" height="11" viewBox="0 0 12 11"><circle cx="2" cy="2" r="1.5" fill="none" stroke="#333e48" stroke-width="1"/><circle cx="2" cy="9" r="1.5" fill="none" stroke="#333e48" stroke-width="1"/><path d="M3,3 L7,5.5 L3,8 M7,5.5 H9" fill="none" stroke="#333e48" stroke-width="1"/><path d="M9,3.5 L12,5.5 L9,7.5 Z" fill="#333e48"/></svg>
<div class="t" style="left:3442.00px;top:204.54px;font-size:9.4px;color:#1a1a1a;font-weight:700;">PREVIEW LOGIC</div>
<div class="t" style="left:2807.00px;width:1200px;text-align:center;top:246.46px;font-size:9.5px;color:#1a1a1a;font-weight:700;">SURVEYMONKEY GENIUS</div>
<svg style="left:0;top:0" width="3600" height="1084"><defs><linearGradient id="dg" gradientUnits="userSpaceOnUse" x1="3337" y1="0" x2="3477" y2="0"><stop offset="0" stop-color="#00bf6f"/><stop offset="1" stop-color="#2ccfd0"/></linearGradient></defs><path d="M3356.4,299.3 A62.5,62.5 0 0 1 3407.0,273.5" fill="none" stroke="#c8cbcd" stroke-width="11"/><path d="M3407.0,273.5 A62.5,62.5 0 1 1 3360.6,294.2" fill="none" stroke="url(#dg)" stroke-width="11" stroke-linecap="round"/></svg>
<div class="t" style="left:2807.00px;width:1200px;text-align:center;top:330.67px;font-size:12.2px;color:#333e48;font-weight:400;">No issues</div>
<div class="a" style="left:3407px;top:423px;width:1px;height:80px;background:#9da5aa"></div>
<div class="t" style="left:2741.00px;width:1200px;text-align:center;top:425.55px;font-size:8.8px;color:#1a1a1a;font-weight:700;letter-spacing:0.3px;">ESTIMATED</div>
<div class="t" style="left:2741.00px;width:1200px;text-align:center;top:438.55px;font-size:8.8px;color:#1a1a1a;font-weight:700;letter-spacing:0.3px;">COMPLETION RATE</div>
<div class="t" style="left:2873.00px;width:1200px;text-align:center;top:425.55px;font-size:8.8px;color:#1a1a1a;font-weight:700;letter-spacing:0.3px;">ESTIMATED TIME TO</div>
<div class="t" style="left:2873.00px;width:1200px;text-align:center;top:438.55px;font-size:8.8px;color:#1a1a1a;font-weight:700;letter-spacing:0.3px;">COMPLETE</div>
<div class="t" style="left:2741.00px;width:1200px;text-align:center;top:464.21px;font-size:17px;color:#555;font-weight:400;font-family:"Liberation Serif",serif">77 %</div>
<div class="t" style="left:2873.00px;width:1200px;text-align:center;top:464.21px;font-size:17px;color:#555;font-weight:400;font-family:"Liberation Serif",serif">6</div>
<div class="t" style="left:2741.00px;width:1200px;text-align:center;top:487.96px;font-size:9.5px;color:#1a1a1a;font-weight:700;">Completed</div>
<div class="t" style="left:2873.00px;width:1200px;text-align:center;top:487.96px;font-size:9.5px;color:#1a1a1a;font-weight:700;">Minutes</div>
<div class="a" style="left:3275px;top:507.5px;width:264px;height:67px;background:#eff0f0"></div>
<div class="a" style="left:3275px;top:507.5px;width:264px;height:1px;background:#d0d3d5"></div>
<div class="a" style="left:3275px;top:541px;width:264px;height:1px;background:#d0d3d5"></div>
<div class="a" style="left:3275px;top:574px;width:264px;height:1px;background:#d0d3d5"></div>
<div class="t" style="left:3289.70px;top:520.54px;font-size:9.4px;color:#333e48;font-weight:700;">2 Tips</div>
<svg style="left:3290px;top:550px;" width="9" height="14" viewBox="0 0 9 14"><path d="M2.5,9.5 C1,8 0.7,6.5 0.7,5 a3.8,3.8 0 0 1 7.6,0 C8.3,6.5 8,8 6.5,9.5 V11.5 H2.5 Z M2.5,12.7 H6.5" fill="none" stroke="#333e48" stroke-width="1.1"/></svg>
<div class="t" style="left:3315.00px;top:553.54px;font-size:9.4px;color:#333e48;font-weight:700;">2 Tips</div>
<svg style="left:3518px;top:555px;" width="12" height="7" viewBox="0 0 12 7"><path d="M0.5,0.5 L6,6 L11.5,0.5" fill="none" stroke="#555" stroke-width="1.1"/></svg>
<div class="a" style="left:3541px;top:104px;width:15px;height:932px;background:#fff"></div>
<svg style="left:3543px;top:118px;" width="11" height="7" viewBox="0 0 11 7"><path d="M0,6.5 L5.5,0.5 L11,6.5 Z" fill="#a3a3a3"/></svg>
<div class="a" style="left:3544px;top:127px;width:9px;height:740px;background:#6b6b6b;border-radius:4.5px"></div>
<svg style="left:3543px;top:1018px;" width="11" height="7" viewBox="0 0 11 7"><path d="M0,0.5 L5.5,6.5 L11,0.5 Z" fill="#a3a3a3"/></svg>
<svg style="left:1684px;top:104px;" width="8" height="8" viewBox="0 0 8 8"><path d="M0,0 H8 A8,8 0 0 0 0,8 Z" fill="#7035ad" transform="rotate(0 4 4)"/></svg>
<svg style="left:3548px;top:104px;" width="8" height="8" viewBox="0 0 8 8"><path d="M0,0 H8 A8,8 0 0 0 0,8 Z" fill="#7035ad" transform="rotate(90 4 4)"/></svg>
<svg style="left:3548px;top:1028px;" width="8" height="8" viewBox="0 0 8 8"><path d="M0,0 H8 A8,8 0 0 0 0,8 Z" fill="#7035ad" transform="rotate(180 4 4)"/></svg>
<svg style="left:1684px;top:1028px;" width="8" height="8" viewBox="0 0 8 8"><path d="M0,0 H8 A8,8 0 0 0 0,8 Z" fill="#7035ad" transform="rotate(270 4 4)"/></svg>
<div class="a" style="left:1703px;top:969px;width:187px;height:40px;background:#fff;box-shadow:0 1px 4px rgba(0,0,0,0.22);border-radius:2px"></div>
<div class="t" style="left:1713.40px;top:983.59px;font-size:12.3px;color:#333e48;font-weight:400;">Device View</div>
<svg style="left:1797px;top:980px;" width="21" height="19" viewBox="0 0 21 19"><rect x="1" y="1" width="19" height="13" rx="1" fill="none" stroke="#00bf6f" stroke-width="1.8"/><path d="M10.5,14 V17 M5,18 H16" stroke="#00bf6f" stroke-width="1.8"/></svg>
<svg style="left:1830px;top:978px;" width="19" height="22" viewBox="0 0 19 22"><rect x="1" y="1" width="17" height="20" rx="2" fill="none" stroke="#333e48" stroke-width="1.6"/><path d="M1,4.5 H18 M1,16.5 H18 M8,18.8 H11" stroke="#333e48" stroke-width="1.3"/></svg>
<svg style="left:1863px;top:978px;" width="14" height="22" viewBox="0 0 14 22"><rect x="1" y="1" width="12" height="20" rx="2" fill="none" stroke="#333e48" stroke-width="1.6"/><path d="M1,4.5 H13 M1,16.5 H13 M5.5,18.8 H8.5" stroke="#333e48" stroke-width="1.3"/></svg>
<div class="a" style="left:3065px;top:969px;width:190px;height:40px;background:#fff;box-shadow:0 1px 4px rgba(0,0,0,0.22);border-radius:2px"></div>
<div class="t" style="left:3074.80px;top:982.92px;font-size:12.5px;color:#333e48;font-weight:400;">Survey Format</div>
<svg style="left:3161px;top:983px;" width="10" height="10" viewBox="0 0 10 10"><circle cx="5" cy="5" r="5" fill="#9da5aa"/><text x="5" y="8.3" font-size="8" font-weight="700" fill="#fff" text-anchor="middle" font-family="Liberation Sans">?</text></svg>
<svg style="left:3187px;top:978px;" width="20" height="20" viewBox="0 0 20 20"><path d="M1,0 V3 H19 V0 M1,20 V17 H19 V20 M1,6 H19 M1,14 H19" fill="none" stroke="#333e48" stroke-width="1.3"/></svg>
<svg style="left:3219px;top:977px;" width="18" height="20" viewBox="0 0 18 20"><rect x="1" y="1" width="16" height="18" fill="none" stroke="#00bf6f" stroke-width="1.6"/><path d="M4,5 H5.5 M7,5 H14 M4,8.5 H5.5 M7,8.5 H14 M4,12 H5.5 M7,12 H14 M4,15.5 H5.5 M7,15.5 H14" stroke="#00bf6f" stroke-width="1.2"/></svg>
<div class="a" style="left:3564px;top:915px;width:28px;height:1px;background:#9a79c8"></div>
<svg style="left:3571px;top:930px;" width="14" height="13" viewBox="0 0 14 13"><rect x="0.6" y="0.6" width="12.8" height="11.8" rx="1.5" fill="none" stroke="#fff" stroke-width="1.1"/><path d="M9,0.6 V12.4" stroke="#fff" stroke-width="1.1"/></svg>
<svg style="left:3571px;top:971px;" width="13" height="13" viewBox="0 0 13 13"><path d="M5,1 H2.5 a1.8,1.8 0 0 0 -1.8,1.8 V10.5 a1.8,1.8 0 0 0 1.8,1.8 H10 a1.8,1.8 0 0 0 1.8,-1.8 V8 M7.5,0.7 H12.3 V5.5 M12.3,0.7 L6,7" fill="none" stroke="#fff" stroke-width="1.1"/></svg>
<svg style="left:3570px;top:1008px;" width="16" height="16" viewBox="0 0 16 16"><path d="M8,1 L9.5,1 L10,3 L11.8,4 L13.6,3.2 L14.8,4.8 L13.6,6.4 L13.8,8.4 L15.3,9.6 L14.6,11.4 L12.6,11.5 L11.3,13 L11.6,15 L9.8,15.5 L8.6,14 L6.8,14 L5.6,15.5 L3.8,15 L4.1,13 L2.8,11.5 L0.8,11.4 L0.1,9.6 L1.6,8.4 L1.8,6.4 L0.6,4.8 L1.8,3.2 L3.6,4 L5.4,3 L5.9,1 Z" fill="none" stroke="#fff" stroke-width="1.1" stroke-linejoin="round"/><circle cx="7.7" cy="8.3" r="2" fill="none" stroke="#fff" stroke-width="1.1"/></svg>
<div class="a" style="left:1680px;top:1040px;width:1920px;height:40px;background:linear-gradient(90deg,#453d55 0%,#44425a 30%,#45455a 82%,#4f3a4e 88.2%,#46435a 93%,#44445a 100%)"></div>
<div class="a" style="left:1680px;top:1080px;width:1920px;height:4px;background:#000"></div>
<svg style="left:1696px;top:1051px;" width="17" height="17" viewBox="0 0 17 17"><path d="M0,2.4 L7.3,1.4 V7.9 H0 Z M8.1,1.3 L17,0 V7.9 H8.1 Z M0,8.9 H7.3 V15.3 L0,14.4 Z M8.1,8.9 H17 V17 L8.1,15.6 Z" fill="#fff"/></svg>
<div class="a" style="left:1731px;top:1040px;width:44px;height:40px;background:#6a5a8a"></div>
<div class="a" style="left:1775px;top:1040px;width:2px;height:40px;background:#554a6e"></div>
<svg style="left:1741px;top:1046px;" width="27" height="27" viewBox="0 0 32 32"><defs><linearGradient id="eg1741a" x1="0" y1="1" x2="1" y2="0"><stop offset="0" stop-color="#1b7fd6"/><stop offset="0.45" stop-color="#35c1f1"/><stop offset="1" stop-color="#6ae38a"/></linearGradient><linearGradient id="eg1741b" x1="0" y1="0" x2="1" y2="1"><stop offset="0" stop-color="#0c59a4"/><stop offset="1" stop-color="#114a8b"/></linearGradient></defs><path d="M2.5,17 C2.5,8 9,1.5 17,1.5 C25,1.5 30.5,7.5 30.5,14 C30.5,18.5 27.5,21 23,21 C18,21 14,20 14,17 C14,15 16,13.5 19,13.5 C17,10 13.5,9 10.5,10 C6,11.5 4,16 5.5,22 Z" fill="url(#eg1741a)"/><path d="M5.5,22 C7.5,28 13,31 18.5,30.5 C23,30 26.5,27.5 28.5,24.5 C24,26.5 18.5,26 15.5,23.5 C14,22 14,19.5 14,17 C11,19 8,22 5.5,22 Z" fill="url(#eg1741b)"/><rect x="0.5" y="20" width="13.5" height="11.5" rx="1.5" fill="#e69a1f"/><rect x="4.5" y="17" width="5" height="3.2" fill="none" stroke="#e69a1f" stroke-width="1.3"/><rect x="0.5" y="24" width="13.5" height="1" fill="#b86e0b"/><rect x="6.5" y="23.5" width="1.5" height="2" fill="#fff3c0"/></svg>
<svg style="left:1792px;top:1048px;" width="25" height="24" viewBox="0 0 25 24"><ellipse cx="11" cy="7.5" rx="10" ry="6" fill="#f5f5f5" stroke="#e0484b" stroke-width="1.2" transform="rotate(-15 11 7.5)"/><ellipse cx="8" cy="11.5" rx="6.5" ry="2.5" fill="#a3a3a3"/><circle cx="11" cy="19" r="3" fill="none" stroke="#1e88d8" stroke-width="1.6"/><circle cx="18.5" cy="20" r="3" fill="none" stroke="#1e88d8" stroke-width="1.6"/><path d="M11.5,16 L14,11 M18,16.5 L14,11" stroke="#1e88d8" stroke-width="1.5"/></svg>
<div class="a" style="left:1731px;top:1077px;width:44px;height:3px;background:#c9a4f2"></div>
<div class="a" style="left:1785px;top:1077px;width:40px;height:3px;background:#c9a4f2"></div>
<div class="t" style="left:2968.00px;width:1200px;text-align:center;top:1045.52px;font-size:11.2px;color:#fff;font-weight:400;">3:10 PM</div>
<div class="t" style="left:2968.00px;width:1200px;text-align:center;top:1063.52px;font-size:11.2px;color:#fff;font-weight:400;">10/31/2023</div></body></html>
